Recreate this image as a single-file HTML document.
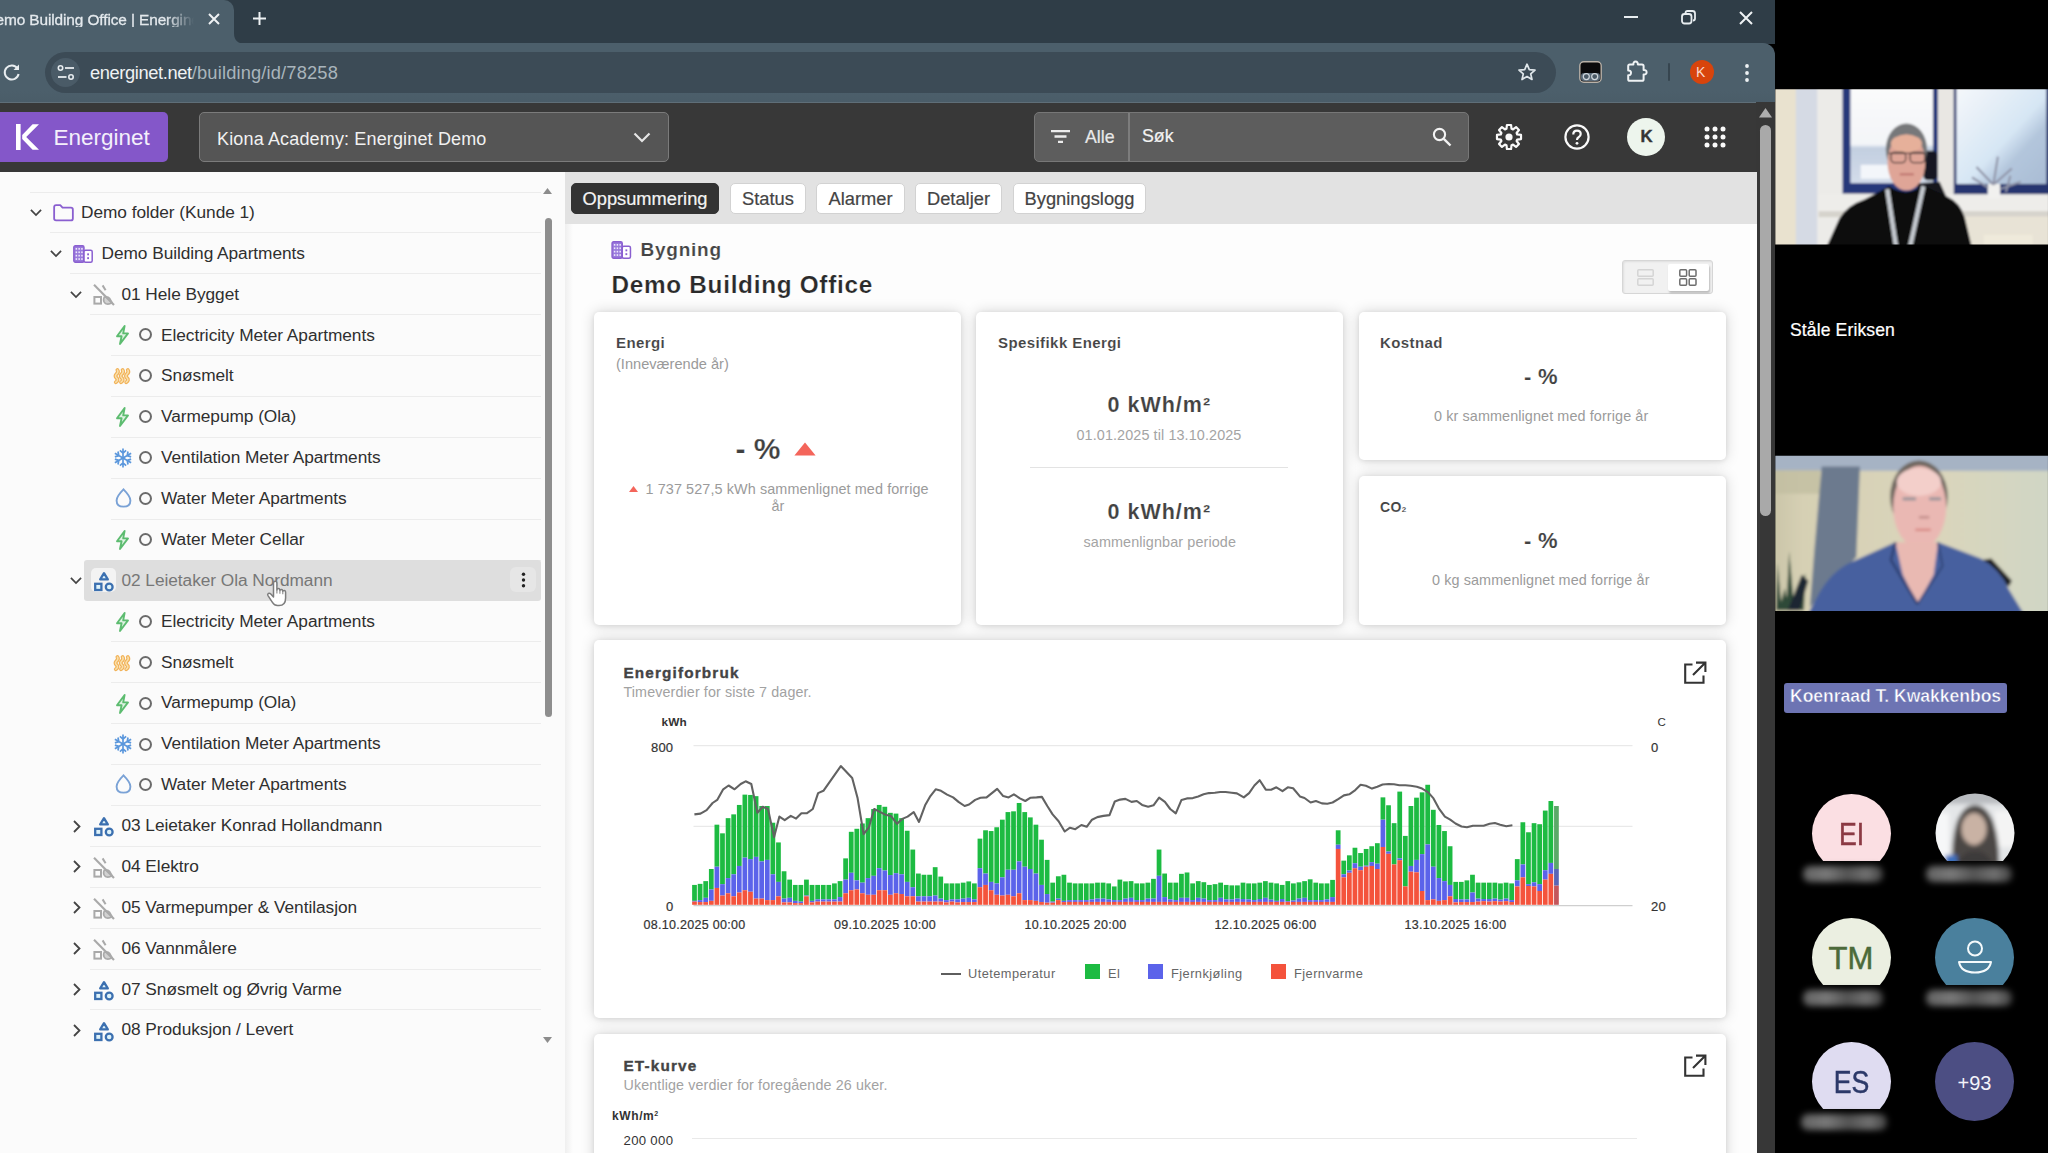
<!DOCTYPE html>
<html><head><meta charset="utf-8"><title>Demo Building Office | Energinet</title>
<style>
*{box-sizing:border-box;margin:0;padding:0}
html,body{width:2048px;height:1153px;overflow:hidden;background:#000;font-family:"Liberation Sans",sans-serif;}
body{position:relative}
.abs{position:absolute}
svg{display:block;overflow:visible}
/* browser chrome */
#tabbar{position:absolute;left:0;top:0;width:1775px;height:44px;background:#2f3d47}
#acttab{position:absolute;left:-12px;top:0;width:246px;height:44px;background:#4c5f6b;border-radius:10px 10px 0 0}
#toolbar{position:absolute;left:0;top:43px;width:1775px;height:60px;background:linear-gradient(#4c5f6b 0%,#4c5f6b 80%,#46576250 100%),#4c5f6b;border-top-right-radius:12px}
#urlpill{position:absolute;left:45px;top:52px;width:1511px;height:41px;border-radius:21px;background:#3c4b56}
#appbar{position:absolute;left:0;top:102px;width:1757px;height:70px;background:#383838;border-top:1px solid #5f6e78}
#pagescroll{position:absolute;left:1756px;top:102px;width:19px;height:1051px;background:#373737}
#leftpanel{position:absolute;left:0;top:172px;width:565px;height:981px;background:#fbfbfb}
#mainbg{position:absolute;left:565px;top:172px;width:1192px;height:981px;background:#fdfdfd}
#tabstrip{position:absolute;left:565px;top:172px;width:1192px;height:52px;background:#e2e2e2}
.card{position:absolute;background:#fff;border-radius:5px;box-shadow:0 0 14px rgba(0,0,0,0.17),0 1px 5px rgba(0,0,0,0.08)}
.t{position:absolute;white-space:nowrap;line-height:1}
.tr{font-size:17.3px;letter-spacing:-0.05px}
.tabb{top:182.5px;height:31px;border-radius:5px;font-size:18.3px;line-height:29.5px;text-align:center;white-space:nowrap;-webkit-text-stroke:0.2px currentColor}
.ch{font-size:15px;font-weight:bold;color:#444;letter-spacing:0.42px;-webkit-text-stroke:0.1px #fff}
.cs{font-size:14.4px;color:#9b9b9b;letter-spacing:0.1px}
.cv{font-size:21.5px;font-weight:bold;color:#424242;letter-spacing:1.0px;-webkit-text-stroke:0.15px #fff}
.cv2{font-size:22px;font-weight:bold;color:#424242;letter-spacing:0.3px;-webkit-text-stroke:0.15px #fff}
.ax{font-size:12.5px;color:#333;letter-spacing:0.2px}
.lg{font-size:12.8px;color:#666;letter-spacing:0.45px}

</style></head>
<body>
<div id="tabbar"></div>
<div id="acttab"></div>
<svg class="abs" style="left:234px;top:33px" width="12" height="11"><path d="M0 0 Q0 11 12 11 L0 11 Z" fill="#4c5f6b"/></svg>
<div id="toolbar"></div>
<div id="urlpill"></div>
<div class="t" id="tabtitle" style="left:-4.5px;top:12px;font-size:15.4px;color:#e4e9ed;letter-spacing:-0.1px;-webkit-text-stroke:0.3px #e4e9ed;width:198.5px;overflow:hidden;-webkit-mask-image:linear-gradient(90deg,#000 86%,transparent 100%)">emo Building Office | Energinet</div>
<svg class="abs" style="left:207px;top:12px" width="14" height="14" viewBox="0 0 14 14"><path d="M2 2 L12 12 M12 2 L2 12" stroke="#eef2f4" stroke-width="2" fill="none"/></svg>
<svg class="abs" style="left:252px;top:11px" width="15" height="15" viewBox="0 0 15 15"><path d="M7.5 1 V14 M1 7.5 H14" stroke="#eef2f4" stroke-width="2" fill="none"/></svg>
<svg class="abs" style="left:1624px;top:16px" width="14" height="3"><rect width="14" height="2" y="0" fill="#e8edf0"/></svg>
<svg class="abs" style="left:1681px;top:10px" width="15" height="15" viewBox="0 0 15 15"><rect x="1" y="4" width="9.5" height="9.5" rx="2.5" fill="none" stroke="#e8edf0" stroke-width="1.8"/><path d="M4.5 3.2 V3 Q4.5 1 6.5 1 H11.5 Q14 1 14 3.5 V8.5 Q14 10.5 12 10.5" fill="none" stroke="#e8edf0" stroke-width="1.8"/></svg>
<svg class="abs" style="left:1739px;top:11px" width="14" height="14" viewBox="0 0 14 14"><path d="M1 1 L13 13 M13 1 L1 13" stroke="#eef2f4" stroke-width="2" fill="none"/></svg>
<svg class="abs" style="left:2px;top:62px" width="20" height="20" viewBox="0 0 20 20"><path d="M15.5 6.5 A7 7 0 1 0 16.6 12" fill="none" stroke="#e8edf0" stroke-width="2"/><path d="M17 2.5 V8 H11.5 Z" fill="#e8edf0"/></svg>
<div class="abs" style="left:51px;top:58px;width:29px;height:29px;border-radius:15px;background:#4a5b67"></div>
<svg class="abs" style="left:57px;top:64px" width="18" height="17" viewBox="0 0 18 17"><circle cx="3.5" cy="4" r="2.2" fill="none" stroke="#e8edf0" stroke-width="1.6"/><path d="M8 4 H17" stroke="#e8edf0" stroke-width="1.8"/><circle cx="14" cy="13" r="2.2" fill="none" stroke="#e8edf0" stroke-width="1.6"/><path d="M1 13 H9.5" stroke="#e8edf0" stroke-width="1.8"/></svg>
<div class="t" style="left:90px;top:63.5px;font-size:18.3px;color:#eef1f3;letter-spacing:-0.38px">energinet.net<span style="color:#a9b5bc;letter-spacing:0.16px">/building/id/78258</span></div>
<svg class="abs" style="left:1517px;top:62px" width="20" height="20" viewBox="0 0 20 20"><path d="M10 2.2 L12.3 7.6 L18 8.1 L13.7 11.9 L15 17.5 L10 14.5 L5 17.5 L6.3 11.9 L2 8.1 L7.7 7.6 Z" fill="none" stroke="#dfe6ea" stroke-width="1.7" stroke-linejoin="round"/></svg>
<svg class="abs" style="left:1579px;top:61px" width="23" height="22" viewBox="0 0 23 22"><rect x="0.8" y="0.8" width="21.4" height="20.4" rx="4" fill="#0a0a0c" stroke="#b9b1a8" stroke-width="1.4"/><rect x="2" y="12" width="19" height="8" rx="3" fill="#5a6a78"/><circle cx="7.3" cy="15.6" r="3" fill="#4a5966" stroke="#cfd6dc" stroke-width="1.2"/><circle cx="15.7" cy="15.6" r="3" fill="#4a5966" stroke="#cfd6dc" stroke-width="1.2"/></svg>
<svg class="abs" style="left:1626px;top:60px" width="22" height="23" viewBox="0 0 22 23"><path d="M2.2 6 Q2.2 4.4 3.8 4.4 H7.4 Q7.2 1.6 9.6 1.6 Q12 1.6 11.8 4.4 H16 Q17.6 4.4 17.6 6 V10 Q20.6 9.8 20.6 12.2 Q20.6 14.6 17.6 14.4 V19.2 Q17.6 20.8 16 20.8 H3.8 Q2.2 20.8 2.2 19.2 V15.2 Q5 15.4 5 12.8 Q5 10.2 2.2 10.4 Z" fill="none" stroke="#eef2f4" stroke-width="2" stroke-linejoin="round"/></svg>
<div class="abs" style="left:1668px;top:63px;width:2px;height:18px;background:#36454f;border-radius:1px"></div>
<div class="abs" style="left:1690px;top:60px;width:24px;height:24px;border-radius:12px;background:#d8440c"></div><div class="t" style="left:1696px;top:65px;font-size:14px;color:#fbd9cf;font-weight:normal">K</div>
<svg class="abs" style="left:1744px;top:63px" width="6" height="20" viewBox="0 0 6 20"><circle cx="3" cy="3" r="1.9" fill="#eef2f4"/><circle cx="3" cy="10" r="1.9" fill="#eef2f4"/><circle cx="3" cy="17" r="1.9" fill="#eef2f4"/></svg>
<div id="appbar"></div>
<div id="pagescroll"></div>
<svg class="abs" style="left:1759px;top:108px" width="13" height="9.5"><path d="M6.5 0 L13 9.5 H0 Z" fill="#adadad"/></svg>
<div class="abs" style="left:1759.6px;top:124.5px;width:11.2px;height:391.5px;border-radius:6px;background:#a9a9a9"></div>
<div class="abs" style="left:-6px;top:112px;width:174px;height:50px;border-radius:5px;background:#8457c9"></div>
<svg class="abs" style="left:16px;top:124px" width="24" height="26" viewBox="0 0 24 26"><rect x="0" y="0" width="4.6" height="26" fill="#fff"/><path d="M23 0.3 L10.2 13 L23 25.7 H16.6 L6.2 15 V11 L16.6 0.3 Z" fill="#fff"/></svg>
<div class="t" style="left:53.5px;top:127px;font-size:22.5px;color:#f4effb">Energinet</div>
<div class="abs" style="left:199px;top:112px;width:470px;height:50px;border-radius:5px;background:#555555;border:1.5px solid #7b7b7b"></div>
<div class="t" style="left:217px;top:130px;font-size:18px;color:#f1f1f1;letter-spacing:0.15px">Kiona Academy: Energinet Demo</div>
<svg class="abs" style="left:633px;top:132px" width="18" height="11" viewBox="0 0 18 11"><path d="M1.5 1.5 L9 9 L16.5 1.5" fill="none" stroke="#e6e6e6" stroke-width="2.2"/></svg>
<div class="abs" style="left:1034px;top:112px;width:435px;height:50px;border-radius:5px;background:#5d5d5d;border:1.5px solid #777"></div>
<div class="abs" style="left:1128px;top:113px;width:1.5px;height:48px;background:#7d7d7d"></div>
<svg class="abs" style="left:1051px;top:130px" width="19" height="13" viewBox="0 0 19 13"><path d="M0 1.1 H19 M3.5 6.5 H15.5 M7 11.9 H12" stroke="#ececec" stroke-width="2.3" fill="none"/></svg>
<div class="t" style="left:1085px;top:129px;font-size:17.8px;color:#e8e8e8;-webkit-text-stroke:0.2px #e8e8e8">Alle</div>
<div class="t" style="left:1142px;top:128px;font-size:17.8px;color:#f3f3f3;-webkit-text-stroke:0.2px #f3f3f3">Søk</div>
<svg class="abs" style="left:1432px;top:127px" width="20" height="20" viewBox="0 0 20 20"><circle cx="7.5" cy="7.5" r="5.6" fill="none" stroke="#f3f3f3" stroke-width="2.1"/><path d="M11.8 11.8 L18.5 18.5" stroke="#f3f3f3" stroke-width="2.4"/></svg>
<svg class="abs" style="left:1496px;top:124px" width="26" height="26" viewBox="0 0 26 26"><path d="M10.46 4.78 L10.94 0.98 L15.06 0.98 L15.54 4.78 L17.01 5.39 L20.04 3.04 L22.96 5.96 L20.61 8.99 L21.22 10.46 L25.02 10.94 L25.02 15.06 L21.22 15.54 L20.61 17.01 L22.96 20.04 L20.04 22.96 L17.01 20.61 L15.54 21.22 L15.06 25.02 L10.94 25.02 L10.46 21.22 L8.99 20.61 L5.96 22.96 L3.04 20.04 L5.39 17.01 L4.78 15.54 L0.98 15.06 L0.98 10.94 L4.78 10.46 L5.39 8.99 L3.04 5.96 L5.96 3.04 L8.99 5.39 Z" fill="none" stroke="#fafafa" stroke-width="2.2" stroke-linejoin="round"/><circle cx="13" cy="13" r="3.6" fill="#fafafa"/></svg>
<svg class="abs" style="left:1564px;top:124px" width="26" height="26" viewBox="0 0 26 26"><circle cx="13" cy="13" r="11.6" fill="none" stroke="#fafafa" stroke-width="2.2"/><path d="M9.3 10.4 Q9.3 6.6 13 6.6 Q16.7 6.6 16.7 10 Q16.7 12 14.6 13.2 Q13 14.2 13 16" fill="none" stroke="#fafafa" stroke-width="2.2"/><circle cx="13" cy="19.3" r="1.4" fill="#fafafa"/></svg>
<div class="abs" style="left:1627px;top:118px;width:38px;height:38px;border-radius:19px;background:#edf5ed"></div><div class="t" style="left:1640.5px;top:129px;font-size:16.8px;font-weight:bold;color:#353535;-webkit-text-stroke:0.4px #353535">K</div>
<svg class="abs" style="left:1704px;top:126px" width="22" height="22" viewBox="0 0 22 22"><circle cx="3" cy="3" r="2.5" fill="#fafafa"/><circle cx="3" cy="11" r="2.5" fill="#fafafa"/><circle cx="3" cy="19" r="2.5" fill="#fafafa"/><circle cx="11" cy="3" r="2.5" fill="#fafafa"/><circle cx="11" cy="11" r="2.5" fill="#fafafa"/><circle cx="11" cy="19" r="2.5" fill="#fafafa"/><circle cx="19" cy="3" r="2.5" fill="#fafafa"/><circle cx="19" cy="11" r="2.5" fill="#fafafa"/><circle cx="19" cy="19" r="2.5" fill="#fafafa"/></svg>
<div id="leftpanel"></div>
<div class="abs" style="left:30px;top:191.5px;width:511px;height:1.1px;background:#ececec"></div>
<div class="abs" style="left:50px;top:232.3px;width:491px;height:1.1px;background:#ececec"></div>
<svg class="abs" style="left:29.8px;top:208.8px" width="12" height="7.5" viewBox="0 0 13 8"><path d="M1 1 L6.5 6.5 L12 1" fill="none" stroke="#444" stroke-width="1.9"/></svg><svg class="abs" style="left:52.7px;top:204.3px" width="21" height="17.5" viewBox="0 0 22 18" preserveAspectRatio="none"><path d="M1.2 3.2 Q1.2 1.2 3.2 1.2 H7.6 L10 3.8 H18.8 Q20.8 3.8 20.8 5.8 V14.8 Q20.8 16.8 18.8 16.8 H3.2 Q1.2 16.8 1.2 14.8 Z" fill="none" stroke="#8a5fd0" stroke-width="1.9" stroke-linejoin="round"/></svg><div class="t tr" style="left:81.0px;top:203.9px;color:#2f2f2f">Demo folder (Kunde 1)</div>
<div class="abs" style="left:70px;top:273.2px;width:471px;height:1.1px;background:#ececec"></div>
<svg class="abs" style="left:49.8px;top:249.8px" width="12" height="7.5" viewBox="0 0 13 8"><path d="M1 1 L6.5 6.5 L12 1" fill="none" stroke="#444" stroke-width="1.9"/></svg><svg class="abs" style="left:72.7px;top:245.1px" width="20" height="18" viewBox="0 0 20 18"><rect x="0.8" y="0.8" width="10.2" height="16.4" rx="1.5" fill="#9a7bdc" stroke="#8a5fd0" stroke-width="1.4"/><rect x="11" y="5.2" width="8.2" height="12" rx="1.5" fill="#fff" stroke="#8a5fd0" stroke-width="1.5"/><rect x="2.6" y="3.0" width="1.5" height="1.7" fill="#efe8fb"/><rect x="5.4" y="3.0" width="1.5" height="1.7" fill="#efe8fb"/><rect x="8.2" y="3.0" width="1.5" height="1.7" fill="#efe8fb"/><rect x="2.6" y="6.4" width="1.5" height="1.7" fill="#efe8fb"/><rect x="5.4" y="6.4" width="1.5" height="1.7" fill="#efe8fb"/><rect x="8.2" y="6.4" width="1.5" height="1.7" fill="#efe8fb"/><rect x="2.6" y="9.8" width="1.5" height="1.7" fill="#efe8fb"/><rect x="5.4" y="9.8" width="1.5" height="1.7" fill="#efe8fb"/><rect x="8.2" y="9.8" width="1.5" height="1.7" fill="#efe8fb"/><rect x="2.6" y="13.2" width="1.5" height="1.7" fill="#efe8fb"/><rect x="5.4" y="13.2" width="1.5" height="1.7" fill="#efe8fb"/><rect x="8.2" y="13.2" width="1.5" height="1.7" fill="#efe8fb"/><rect x="14.2" y="8.4" width="1.8" height="1.9" fill="#8a5fd0"/><rect x="14.2" y="12.2" width="1.8" height="1.9" fill="#8a5fd0"/></svg><div class="t tr" style="left:101.5px;top:244.8px;color:#2f2f2f">Demo Building Apartments</div>
<div class="abs" style="left:90px;top:314.1px;width:451px;height:1.1px;background:#ececec"></div>
<svg class="abs" style="left:69.8px;top:290.6px" width="12" height="7.5" viewBox="0 0 13 8"><path d="M1 1 L6.5 6.5 L12 1" fill="none" stroke="#444" stroke-width="1.9"/></svg><svg class="abs" style="left:92.5px;top:284.1px" width="22" height="22" viewBox="0 0 22 22"><rect x="1.4" y="13" width="6.6" height="6.6" fill="none" stroke="#a9a9a9" stroke-width="2"/><path d="M11.2 13.2 Q14.6 11.8 16.8 14.6 L19 18.6 Q16 20.8 13 19.8 Q10.4 18.4 10.6 15.4 Z" fill="#d2d2d2" stroke="#a9a9a9" stroke-width="1.6"/><path d="M9.6 1.4 L12.6 6.2" stroke="#a9a9a9" stroke-width="2"/><path d="M1 0.8 L21 21" stroke="#a9a9a9" stroke-width="2.1"/></svg><div class="t tr" style="left:121.5px;top:285.7px;color:#2f2f2f">01 Hele Bygget</div>
<div class="abs" style="left:111px;top:355.0px;width:430px;height:1.1px;background:#ececec"></div>
<svg class="abs" style="left:115.4px;top:325.4px" width="15" height="20" viewBox="0 0 15 20"><path d="M9.6 1 L2 11.2 H6.6 L5 19 L13 8.4 H8.2 Z" fill="#dff3e3" stroke="#5dbc70" stroke-width="1.9" stroke-linejoin="round"/></svg><div class="abs" style="left:139px;top:328.4px;width:13px;height:13px;border-radius:7px;border:2px solid #6b6b6b"></div><div class="t tr" style="left:161px;top:326.6px;color:#2f2f2f">Electricity Meter Apartments</div>
<div class="abs" style="left:111px;top:395.9px;width:430px;height:1.1px;background:#ececec"></div>
<svg class="abs" style="left:113.4px;top:367.3px" width="18" height="18" viewBox="0 0 18 18"><path d="M4.4 3 Q5.8 5 3.6 7 Q1.4 9 3.6 11 Q5.8 13 2.8 15.2" fill="none" stroke="#f1b258" stroke-width="3.9" stroke-linecap="round"/><path d="M4.4 3 Q5.8 5 3.6 7 Q1.4 9 3.6 11 Q5.8 13 2.8 15.2" fill="none" stroke="#fae0ac" stroke-width="1.5" stroke-linecap="round"/><path d="M9.6 3 Q11.0 5 8.8 7 Q6.6 9 8.8 11 Q11.0 13 8.0 15.2" fill="none" stroke="#f1b258" stroke-width="3.9" stroke-linecap="round"/><path d="M9.6 3 Q11.0 5 8.8 7 Q6.6 9 8.8 11 Q11.0 13 8.0 15.2" fill="none" stroke="#fae0ac" stroke-width="1.5" stroke-linecap="round"/><path d="M14.8 3 Q16.2 5 14.0 7 Q11.8 9 14.0 11 Q16.2 13 13.2 15.2" fill="none" stroke="#f1b258" stroke-width="3.9" stroke-linecap="round"/><path d="M14.8 3 Q16.2 5 14.0 7 Q11.8 9 14.0 11 Q16.2 13 13.2 15.2" fill="none" stroke="#fae0ac" stroke-width="1.5" stroke-linecap="round"/></svg><div class="abs" style="left:139px;top:369.3px;width:13px;height:13px;border-radius:7px;border:2px solid #6b6b6b"></div><div class="t tr" style="left:161px;top:367.4px;color:#2f2f2f">Snøsmelt</div>
<div class="abs" style="left:111px;top:436.8px;width:430px;height:1.1px;background:#ececec"></div>
<svg class="abs" style="left:115.4px;top:407.2px" width="15" height="20" viewBox="0 0 15 20"><path d="M9.6 1 L2 11.2 H6.6 L5 19 L13 8.4 H8.2 Z" fill="#dff3e3" stroke="#5dbc70" stroke-width="1.9" stroke-linejoin="round"/></svg><div class="abs" style="left:139px;top:410.2px;width:13px;height:13px;border-radius:7px;border:2px solid #6b6b6b"></div><div class="t tr" style="left:161px;top:408.3px;color:#2f2f2f">Varmepump (Ola)</div>
<div class="abs" style="left:111px;top:477.7px;width:430px;height:1.1px;background:#ececec"></div>
<svg class="abs" style="left:112.8px;top:447.6px" width="20" height="20" viewBox="0 0 20 20"><g transform="rotate(0 10 10)"><path d="M10 0.6 V19.4 M6.9 2.4 L10 5.2 L13.1 2.4 M6.9 17.6 L10 14.8 L13.1 17.6" fill="none" stroke="#5b97dc" stroke-width="1.7"/></g><g transform="rotate(60 10 10)"><path d="M10 0.6 V19.4 M6.9 2.4 L10 5.2 L13.1 2.4 M6.9 17.6 L10 14.8 L13.1 17.6" fill="none" stroke="#5b97dc" stroke-width="1.7"/></g><g transform="rotate(120 10 10)"><path d="M10 0.6 V19.4 M6.9 2.4 L10 5.2 L13.1 2.4 M6.9 17.6 L10 14.8 L13.1 17.6" fill="none" stroke="#5b97dc" stroke-width="1.7"/></g></svg><div class="abs" style="left:139px;top:451.1px;width:13px;height:13px;border-radius:7px;border:2px solid #6b6b6b"></div><div class="t tr" style="left:161px;top:449.2px;color:#2f2f2f">Ventilation Meter Apartments</div>
<div class="abs" style="left:111px;top:518.6px;width:430px;height:1.1px;background:#ececec"></div>
<svg class="abs" style="left:114.8px;top:487.9px" width="17" height="20" viewBox="0 0 17 20"><path d="M8.5 1.4 Q15.4 8.4 15.4 12.4 Q15.4 18.6 8.5 18.6 Q1.6 18.6 1.6 12.4 Q1.6 8.4 8.5 1.4 Z" fill="none" stroke="#7aa2d6" stroke-width="1.9"/></svg><div class="abs" style="left:139px;top:492.1px;width:13px;height:13px;border-radius:7px;border:2px solid #6b6b6b"></div><div class="t tr" style="left:161px;top:490.0px;color:#2f2f2f">Water Meter Apartments</div>
<div class="abs" style="left:111px;top:559.5px;width:430px;height:1.1px;background:#ececec"></div>
<svg class="abs" style="left:115.4px;top:530.0px" width="15" height="20" viewBox="0 0 15 20"><path d="M9.6 1 L2 11.2 H6.6 L5 19 L13 8.4 H8.2 Z" fill="#dff3e3" stroke="#5dbc70" stroke-width="1.9" stroke-linejoin="round"/></svg><div class="abs" style="left:139px;top:533.0px;width:13px;height:13px;border-radius:7px;border:2px solid #6b6b6b"></div><div class="t tr" style="left:161px;top:530.9px;color:#2f2f2f">Water Meter Cellar</div>
<div class="abs" style="left:84px;top:560.4px;width:457px;height:40.4px;background:#dedede;border-radius:3px"></div>
<div class="abs" style="left:90.5px;top:568.4px;width:25px;height:24px;border-radius:5px;background:#f3f3f3"></div>
<div class="abs" style="left:510px;top:567.4px;width:26px;height:25px;border-radius:6px;background:#e6e6e6"></div>
<svg class="abs" style="left:69.8px;top:577.0px" width="12" height="7.5" viewBox="0 0 13 8"><path d="M1 1 L6.5 6.5 L12 1" fill="none" stroke="#444" stroke-width="1.9"/></svg><svg class="abs" style="left:92.5px;top:571.0px" width="22" height="22" viewBox="0 0 22 22"><path d="M11 2.2 L14.8 8.4 H7.2 Z" fill="#dff3fa" stroke="#3c70b0" stroke-width="2.3" stroke-linejoin="round"/><rect x="2.2" y="12.8" width="6.2" height="6.2" fill="#dff3fa" stroke="#3c70b0" stroke-width="2.3"/><circle cx="16.2" cy="16" r="3.4" fill="#dff3fa" stroke="#3c70b0" stroke-width="2.3"/></svg><div class="t tr" style="left:121.5px;top:571.8px;color:#777">02 Leietaker Ola Nordmann</div>
<div class="abs" style="left:111px;top:641.3px;width:430px;height:1.1px;background:#ececec"></div>
<svg class="abs" style="left:115.4px;top:611.8px" width="15" height="20" viewBox="0 0 15 20"><path d="M9.6 1 L2 11.2 H6.6 L5 19 L13 8.4 H8.2 Z" fill="#dff3e3" stroke="#5dbc70" stroke-width="1.9" stroke-linejoin="round"/></svg><div class="abs" style="left:139px;top:614.8px;width:13px;height:13px;border-radius:7px;border:2px solid #6b6b6b"></div><div class="t tr" style="left:161px;top:612.7px;color:#2f2f2f">Electricity Meter Apartments</div>
<div class="abs" style="left:111px;top:682.2px;width:430px;height:1.1px;background:#ececec"></div>
<svg class="abs" style="left:113.4px;top:653.7px" width="18" height="18" viewBox="0 0 18 18"><path d="M4.4 3 Q5.8 5 3.6 7 Q1.4 9 3.6 11 Q5.8 13 2.8 15.2" fill="none" stroke="#f1b258" stroke-width="3.9" stroke-linecap="round"/><path d="M4.4 3 Q5.8 5 3.6 7 Q1.4 9 3.6 11 Q5.8 13 2.8 15.2" fill="none" stroke="#fae0ac" stroke-width="1.5" stroke-linecap="round"/><path d="M9.6 3 Q11.0 5 8.8 7 Q6.6 9 8.8 11 Q11.0 13 8.0 15.2" fill="none" stroke="#f1b258" stroke-width="3.9" stroke-linecap="round"/><path d="M9.6 3 Q11.0 5 8.8 7 Q6.6 9 8.8 11 Q11.0 13 8.0 15.2" fill="none" stroke="#fae0ac" stroke-width="1.5" stroke-linecap="round"/><path d="M14.8 3 Q16.2 5 14.0 7 Q11.8 9 14.0 11 Q16.2 13 13.2 15.2" fill="none" stroke="#f1b258" stroke-width="3.9" stroke-linecap="round"/><path d="M14.8 3 Q16.2 5 14.0 7 Q11.8 9 14.0 11 Q16.2 13 13.2 15.2" fill="none" stroke="#fae0ac" stroke-width="1.5" stroke-linecap="round"/></svg><div class="abs" style="left:139px;top:655.7px;width:13px;height:13px;border-radius:7px;border:2px solid #6b6b6b"></div><div class="t tr" style="left:161px;top:653.5px;color:#2f2f2f">Snøsmelt</div>
<div class="abs" style="left:111px;top:723.1px;width:430px;height:1.1px;background:#ececec"></div>
<svg class="abs" style="left:115.4px;top:693.5px" width="15" height="20" viewBox="0 0 15 20"><path d="M9.6 1 L2 11.2 H6.6 L5 19 L13 8.4 H8.2 Z" fill="#dff3e3" stroke="#5dbc70" stroke-width="1.9" stroke-linejoin="round"/></svg><div class="abs" style="left:139px;top:696.5px;width:13px;height:13px;border-radius:7px;border:2px solid #6b6b6b"></div><div class="t tr" style="left:161px;top:694.4px;color:#2f2f2f">Varmepump (Ola)</div>
<div class="abs" style="left:111px;top:764.0px;width:430px;height:1.1px;background:#ececec"></div>
<svg class="abs" style="left:112.8px;top:734.0px" width="20" height="20" viewBox="0 0 20 20"><g transform="rotate(0 10 10)"><path d="M10 0.6 V19.4 M6.9 2.4 L10 5.2 L13.1 2.4 M6.9 17.6 L10 14.8 L13.1 17.6" fill="none" stroke="#5b97dc" stroke-width="1.7"/></g><g transform="rotate(60 10 10)"><path d="M10 0.6 V19.4 M6.9 2.4 L10 5.2 L13.1 2.4 M6.9 17.6 L10 14.8 L13.1 17.6" fill="none" stroke="#5b97dc" stroke-width="1.7"/></g><g transform="rotate(120 10 10)"><path d="M10 0.6 V19.4 M6.9 2.4 L10 5.2 L13.1 2.4 M6.9 17.6 L10 14.8 L13.1 17.6" fill="none" stroke="#5b97dc" stroke-width="1.7"/></g></svg><div class="abs" style="left:139px;top:737.5px;width:13px;height:13px;border-radius:7px;border:2px solid #6b6b6b"></div><div class="t tr" style="left:161px;top:735.3px;color:#2f2f2f">Ventilation Meter Apartments</div>
<div class="abs" style="left:111px;top:804.9px;width:430px;height:1.1px;background:#ececec"></div>
<svg class="abs" style="left:114.8px;top:774.2px" width="17" height="20" viewBox="0 0 17 20"><path d="M8.5 1.4 Q15.4 8.4 15.4 12.4 Q15.4 18.6 8.5 18.6 Q1.6 18.6 1.6 12.4 Q1.6 8.4 8.5 1.4 Z" fill="none" stroke="#7aa2d6" stroke-width="1.9"/></svg><div class="abs" style="left:139px;top:778.4px;width:13px;height:13px;border-radius:7px;border:2px solid #6b6b6b"></div><div class="t tr" style="left:161px;top:776.1px;color:#2f2f2f">Water Meter Apartments</div>
<div class="abs" style="left:90px;top:845.8px;width:451px;height:1.1px;background:#ececec"></div>
<svg class="abs" style="left:73.0px;top:819.5px" width="8" height="13" viewBox="0 0 8 13"><path d="M1 1 L6.5 6.5 L1 12" fill="none" stroke="#444" stroke-width="1.8"/></svg><svg class="abs" style="left:92.5px;top:816.4px" width="22" height="22" viewBox="0 0 22 22"><path d="M11 2.2 L14.8 8.4 H7.2 Z" fill="#dff3fa" stroke="#3c70b0" stroke-width="2.3" stroke-linejoin="round"/><rect x="2.2" y="12.8" width="6.2" height="6.2" fill="#dff3fa" stroke="#3c70b0" stroke-width="2.3"/><circle cx="16.2" cy="16" r="3.4" fill="#dff3fa" stroke="#3c70b0" stroke-width="2.3"/></svg><div class="t tr" style="left:121.5px;top:817.0px;color:#2f2f2f">03 Leietaker Konrad Hollandmann</div>
<div class="abs" style="left:90px;top:886.7px;width:451px;height:1.1px;background:#ececec"></div>
<svg class="abs" style="left:73.0px;top:860.4px" width="8" height="13" viewBox="0 0 8 13"><path d="M1 1 L6.5 6.5 L1 12" fill="none" stroke="#444" stroke-width="1.8"/></svg><svg class="abs" style="left:92.5px;top:856.8px" width="22" height="22" viewBox="0 0 22 22"><rect x="1.4" y="13" width="6.6" height="6.6" fill="none" stroke="#a9a9a9" stroke-width="2"/><path d="M11.2 13.2 Q14.6 11.8 16.8 14.6 L19 18.6 Q16 20.8 13 19.8 Q10.4 18.4 10.6 15.4 Z" fill="#d2d2d2" stroke="#a9a9a9" stroke-width="1.6"/><path d="M9.6 1.4 L12.6 6.2" stroke="#a9a9a9" stroke-width="2"/><path d="M1 0.8 L21 21" stroke="#a9a9a9" stroke-width="2.1"/></svg><div class="t tr" style="left:121.5px;top:857.9px;color:#2f2f2f">04 Elektro</div>
<div class="abs" style="left:90px;top:927.6px;width:451px;height:1.1px;background:#ececec"></div>
<svg class="abs" style="left:73.0px;top:901.2px" width="8" height="13" viewBox="0 0 8 13"><path d="M1 1 L6.5 6.5 L1 12" fill="none" stroke="#444" stroke-width="1.8"/></svg><svg class="abs" style="left:92.5px;top:897.6px" width="22" height="22" viewBox="0 0 22 22"><rect x="1.4" y="13" width="6.6" height="6.6" fill="none" stroke="#a9a9a9" stroke-width="2"/><path d="M11.2 13.2 Q14.6 11.8 16.8 14.6 L19 18.6 Q16 20.8 13 19.8 Q10.4 18.4 10.6 15.4 Z" fill="#d2d2d2" stroke="#a9a9a9" stroke-width="1.6"/><path d="M9.6 1.4 L12.6 6.2" stroke="#a9a9a9" stroke-width="2"/><path d="M1 0.8 L21 21" stroke="#a9a9a9" stroke-width="2.1"/></svg><div class="t tr" style="left:121.5px;top:898.7px;color:#2f2f2f">05 Varmepumper &amp; Ventilasjon</div>
<div class="abs" style="left:90px;top:968.5px;width:451px;height:1.1px;background:#ececec"></div>
<svg class="abs" style="left:73.0px;top:942.2px" width="8" height="13" viewBox="0 0 8 13"><path d="M1 1 L6.5 6.5 L1 12" fill="none" stroke="#444" stroke-width="1.8"/></svg><svg class="abs" style="left:92.5px;top:938.6px" width="22" height="22" viewBox="0 0 22 22"><rect x="1.4" y="13" width="6.6" height="6.6" fill="none" stroke="#a9a9a9" stroke-width="2"/><path d="M11.2 13.2 Q14.6 11.8 16.8 14.6 L19 18.6 Q16 20.8 13 19.8 Q10.4 18.4 10.6 15.4 Z" fill="#d2d2d2" stroke="#a9a9a9" stroke-width="1.6"/><path d="M9.6 1.4 L12.6 6.2" stroke="#a9a9a9" stroke-width="2"/><path d="M1 0.8 L21 21" stroke="#a9a9a9" stroke-width="2.1"/></svg><div class="t tr" style="left:121.5px;top:939.6px;color:#2f2f2f">06 Vannmålere</div>
<div class="abs" style="left:90px;top:1009.4px;width:451px;height:1.1px;background:#ececec"></div>
<svg class="abs" style="left:73.0px;top:983.1px" width="8" height="13" viewBox="0 0 8 13"><path d="M1 1 L6.5 6.5 L1 12" fill="none" stroke="#444" stroke-width="1.8"/></svg><svg class="abs" style="left:92.5px;top:980.0px" width="22" height="22" viewBox="0 0 22 22"><path d="M11 2.2 L14.8 8.4 H7.2 Z" fill="#dff3fa" stroke="#3c70b0" stroke-width="2.3" stroke-linejoin="round"/><rect x="2.2" y="12.8" width="6.2" height="6.2" fill="#dff3fa" stroke="#3c70b0" stroke-width="2.3"/><circle cx="16.2" cy="16" r="3.4" fill="#dff3fa" stroke="#3c70b0" stroke-width="2.3"/></svg><div class="t tr" style="left:121.5px;top:980.5px;color:#2f2f2f">07 Snøsmelt og Øvrig Varme</div>
<svg class="abs" style="left:73.0px;top:1024.0px" width="8" height="13" viewBox="0 0 8 13"><path d="M1 1 L6.5 6.5 L1 12" fill="none" stroke="#444" stroke-width="1.8"/></svg><svg class="abs" style="left:92.5px;top:1020.9px" width="22" height="22" viewBox="0 0 22 22"><path d="M11 2.2 L14.8 8.4 H7.2 Z" fill="#dff3fa" stroke="#3c70b0" stroke-width="2.3" stroke-linejoin="round"/><rect x="2.2" y="12.8" width="6.2" height="6.2" fill="#dff3fa" stroke="#3c70b0" stroke-width="2.3"/><circle cx="16.2" cy="16" r="3.4" fill="#dff3fa" stroke="#3c70b0" stroke-width="2.3"/></svg><div class="t tr" style="left:121.5px;top:1021.4px;color:#2f2f2f">08 Produksjon / Levert</div>
<svg class="abs" style="left:520.5px;top:572.4px" width="5" height="16" viewBox="0 0 5 16"><circle cx="2.5" cy="2.2" r="1.7" fill="#222"/><circle cx="2.5" cy="8" r="1.7" fill="#222"/><circle cx="2.5" cy="13.8" r="1.7" fill="#222"/></svg>
<svg class="abs" style="left:266px;top:580px" width="22" height="27" viewBox="0 0 22 27"><path d="M7.5 14 V3.2 Q7.5 1.2 9.2 1.2 Q10.9 1.2 10.9 3.2 V10 Q11 8.6 12.4 8.6 Q13.9 8.6 13.9 10.6 Q14.1 9.4 15.4 9.4 Q16.8 9.4 16.8 11.4 Q17 10.4 18.2 10.4 Q19.6 10.4 19.6 12.6 V18 Q19.6 25.6 13 25.6 H11.5 Q8.4 25.6 6.4 22.4 L2 15.6 Q1.2 14.2 2.4 13.4 Q3.6 12.8 4.8 14 L7.5 17 Z" fill="#fff" stroke="#7d7d7d" stroke-width="1.5" stroke-linejoin="round"/><path d="M10.9 10 V13.4 M13.9 11 V13.8 M16.8 12 V14.2" stroke="#8a8a8a" stroke-width="1.1"/></svg>
<svg class="abs" style="left:543px;top:188px" width="9" height="6"><path d="M4.5 0 L9 6 H0 Z" fill="#8c8c8c"/></svg>
<svg class="abs" style="left:543px;top:1037px" width="9" height="6"><path d="M4.5 6 L9 0 H0 Z" fill="#8c8c8c"/></svg>
<div class="abs" style="left:544.5px;top:218px;width:7px;height:499px;border-radius:4px;background:#8e8e8e"></div>
<div id="mainbg"></div>
<div id="tabstrip"></div>
<div class="abs" style="left:565px;top:224px;width:8px;height:929px;background:linear-gradient(90deg,#efefef,#fdfdfd)"></div>
<div class="abs tabb" style="left:571px;width:148px;background:#333;color:#f4f4f4;border:1px solid #333">Oppsummering</div>
<div class="abs tabb" style="left:730px;width:76px;background:#fff;color:#444;border:1px solid #d2d2d2">Status</div>
<div class="abs tabb" style="left:816px;width:89px;background:#fff;color:#444;border:1px solid #d2d2d2">Alarmer</div>
<div class="abs tabb" style="left:915px;width:87px;background:#fff;color:#444;border:1px solid #d2d2d2">Detaljer</div>
<div class="abs tabb" style="left:1013px;width:133px;background:#fff;color:#444;border:1px solid #d2d2d2">Bygningslogg</div>
<svg class="abs" style="left:611px;top:241px" width="20.5" height="18" viewBox="0 0 20 18"><rect x="0.8" y="0.8" width="10.2" height="16.4" rx="1.5" fill="#9a7bdc" stroke="#8a5fd0" stroke-width="1.4"/><rect x="11" y="5.2" width="8.2" height="12" rx="1.5" fill="#fff" stroke="#8a5fd0" stroke-width="1.5"/><rect x="2.6" y="3.0" width="1.5" height="1.7" fill="#efe8fb"/><rect x="5.4" y="3.0" width="1.5" height="1.7" fill="#efe8fb"/><rect x="8.2" y="3.0" width="1.5" height="1.7" fill="#efe8fb"/><rect x="2.6" y="6.4" width="1.5" height="1.7" fill="#efe8fb"/><rect x="5.4" y="6.4" width="1.5" height="1.7" fill="#efe8fb"/><rect x="8.2" y="6.4" width="1.5" height="1.7" fill="#efe8fb"/><rect x="2.6" y="9.8" width="1.5" height="1.7" fill="#efe8fb"/><rect x="5.4" y="9.8" width="1.5" height="1.7" fill="#efe8fb"/><rect x="8.2" y="9.8" width="1.5" height="1.7" fill="#efe8fb"/><rect x="2.6" y="13.2" width="1.5" height="1.7" fill="#efe8fb"/><rect x="5.4" y="13.2" width="1.5" height="1.7" fill="#efe8fb"/><rect x="8.2" y="13.2" width="1.5" height="1.7" fill="#efe8fb"/><rect x="14.2" y="8.4" width="1.8" height="1.9" fill="#8a5fd0"/><rect x="14.2" y="12.2" width="1.8" height="1.9" fill="#8a5fd0"/></svg>
<div class="t" style="left:640.5px;top:240.3px;font-size:19px;font-weight:bold;color:#454545;letter-spacing:0.75px;-webkit-text-stroke:0.15px #fff">Bygning</div>
<div class="t" style="left:611.5px;top:272.5px;font-size:24.3px;font-weight:bold;color:#2a2a2a;letter-spacing:0.72px;-webkit-text-stroke:0.22px #fff">Demo Building Office</div>
<div class="abs" style="left:1622px;top:260px;width:90.5px;height:34px;border-radius:3px;background:#f1f1f1;border:1.6px solid #d6d6d6;box-shadow:inset 1px 1px 2px rgba(0,0,0,0.08)"></div>
<div class="abs" style="left:1668px;top:263.5px;width:41px;height:27px;border-radius:2px;background:#fff;box-shadow:1px 2px 2px rgba(0,0,0,0.22)"></div>
<svg class="abs" style="left:1637px;top:268.5px" width="17" height="17" viewBox="0 0 17 17"><rect x="0.8" y="0.8" width="15.4" height="6.4" rx="1" fill="none" stroke="#d4d4d4" stroke-width="1.5"/><rect x="0.8" y="9.8" width="15.4" height="6.4" rx="1" fill="none" stroke="#d4d4d4" stroke-width="1.5"/></svg>
<svg class="abs" style="left:1679px;top:268.5px" width="18" height="17" viewBox="0 0 18 17"><rect x="0.8" y="0.8" width="6.8" height="6.4" rx="1" fill="none" stroke="#6e6e6e" stroke-width="1.5"/><rect x="10.2" y="0.8" width="6.8" height="6.4" rx="1" fill="none" stroke="#6e6e6e" stroke-width="1.5"/><rect x="0.8" y="9.8" width="6.8" height="6.4" rx="1" fill="none" stroke="#6e6e6e" stroke-width="1.5"/><rect x="10.2" y="9.8" width="6.8" height="6.4" rx="1" fill="none" stroke="#6e6e6e" stroke-width="1.5"/></svg>
<div class="card" style="left:594px;top:311.5px;width:366.5px;height:313px"></div>
<div class="card" style="left:976px;top:311.5px;width:366.5px;height:313px"></div>
<div class="card" style="left:1358.5px;top:311.5px;width:367px;height:148px"></div>
<div class="card" style="left:1358.5px;top:475.5px;width:367px;height:149px"></div>
<div class="t ch" style="left:616px;top:335px">Energi</div>
<div class="t" style="left:616px;top:357px;font-size:14.6px;color:#9a9a9a">(Inneværende år)</div>
<div class="t" style="left:735.5px;top:434px;font-size:30px;font-weight:bold;color:#404040;letter-spacing:0px;-webkit-text-stroke:0.25px #fff">- %</div>
<svg class="abs" style="left:794px;top:441.5px" width="22" height="14"><path d="M11 0.5 L21.6 13.6 H0.4 Z" fill="#f4655b"/></svg>
<svg class="abs" style="left:629px;top:486px" width="9" height="6"><path d="M4.5 0 L9 6 H0 Z" fill="#f4655b"/></svg>
<div class="t cs" style="left:645.5px;top:481.5px">1 737 527,5 kWh sammenlignet med forrige</div>
<div class="t cs" style="left:771.5px;top:498.5px">år</div>
<div class="t ch" style="left:998px;top:335px">Spesifikk Energi</div>
<div class="t cv" style="left:1107.5px;top:395px">0 kWh/m²</div>
<div class="t" style="left:1076.5px;top:428px;font-size:14.4px;color:#a4a4a4;letter-spacing:0.1px">01.01.2025 til 13.10.2025</div>
<div class="abs" style="left:1030px;top:466.5px;width:258px;height:1.3px;background:#e3e3e3"></div>
<div class="t cv" style="left:1107.5px;top:501.7px">0 kWh/m²</div>
<div class="t" style="left:1083.5px;top:534.5px;font-size:14.4px;color:#a4a4a4;letter-spacing:0.1px">sammenlignbar periode</div>
<div class="t ch" style="left:1380px;top:335px">Kostnad</div>
<div class="t cv2" style="left:1524px;top:365.5px">- %</div>
<div class="t cs" style="left:1434px;top:408.5px">0 kr sammenlignet med forrige år</div>
<div class="t ch" style="left:1380px;top:500px;font-size:14px">CO<span style="font-size:8px">2</span></div>
<div class="t cv2" style="left:1524px;top:529.5px">- %</div>
<div class="t cs" style="left:1432px;top:572.5px">0 kg sammenlignet med forrige år</div>
<div class="card" style="left:594px;top:639.5px;width:1131.5px;height:378px"></div>
<div class="t" style="left:623.5px;top:664.9px;font-size:15.3px;font-weight:bold;color:#444;letter-spacing:1.15px;-webkit-text-stroke:0.35px #444">Energiforbruk</div>
<div class="t" style="left:623.5px;top:685px;font-size:14.3px;color:#a2a2a2;letter-spacing:0.12px">Timeverdier for siste 7 dager.</div>
<svg class="abs" style="left:1682px;top:661px" width="25" height="25" viewBox="0 0 25 25"><path d="M10.5 3.5 H3.2 V21.8 H21.5 V14.5" fill="none" stroke="#333" stroke-width="2.1"/><path d="M11 14 L22.5 2.5 M14 1.6 H23.4 V11" fill="none" stroke="#333" stroke-width="2.1"/></svg>
<svg class="abs" style="left:0;top:0" width="1760" height="1153" viewBox="0 0 1760 1153"><path d="M693.5 745.6 H1632.5" stroke="#e9e9e9" stroke-width="1.3"/><path d="M693.5 826.4 H1632.5" stroke="#e9e9e9" stroke-width="1.3"/><path d="M693.5 905.6 H1632.5" stroke="#cfcfcf" stroke-width="1.4"/><rect x="692.12" y="884.92" width="4.75" height="15.93" fill="#1dbb42"/><rect x="692.12" y="900.85" width="4.75" height="0.76" fill="#5b63ea"/><rect x="692.12" y="901.61" width="4.75" height="3.19" fill="#f4533c"/><rect x="697.72" y="883.86" width="4.75" height="16.24" fill="#1dbb42"/><rect x="697.72" y="900.10" width="4.75" height="1.97" fill="#5b63ea"/><rect x="697.72" y="902.07" width="4.75" height="2.73" fill="#f4533c"/><rect x="703.32" y="881.13" width="4.75" height="16.69" fill="#1dbb42"/><rect x="703.32" y="897.82" width="4.75" height="4.25" fill="#5b63ea"/><rect x="703.32" y="902.07" width="4.75" height="2.73" fill="#f4533c"/><rect x="708.92" y="868.99" width="4.75" height="20.49" fill="#1dbb42"/><rect x="708.92" y="889.47" width="4.75" height="11.38" fill="#5b63ea"/><rect x="708.92" y="900.85" width="4.75" height="3.95" fill="#f4533c"/><rect x="714.51" y="824.68" width="4.75" height="42.03" fill="#1dbb42"/><rect x="714.51" y="866.71" width="4.75" height="21.24" fill="#5b63ea"/><rect x="714.51" y="887.96" width="4.75" height="16.84" fill="#f4533c"/><rect x="720.11" y="833.33" width="4.75" height="50.83" fill="#1dbb42"/><rect x="720.11" y="884.16" width="4.75" height="11.38" fill="#5b63ea"/><rect x="720.11" y="895.54" width="4.75" height="9.26" fill="#f4533c"/><rect x="725.71" y="818.15" width="4.75" height="59.94" fill="#1dbb42"/><rect x="725.71" y="878.09" width="4.75" height="15.17" fill="#5b63ea"/><rect x="725.71" y="893.27" width="4.75" height="11.53" fill="#f4533c"/><rect x="731.30" y="814.36" width="4.75" height="59.94" fill="#1dbb42"/><rect x="731.30" y="874.30" width="4.75" height="22.00" fill="#5b63ea"/><rect x="731.30" y="896.30" width="4.75" height="8.50" fill="#f4533c"/><rect x="736.90" y="804.95" width="4.75" height="61.00" fill="#1dbb42"/><rect x="736.90" y="865.95" width="4.75" height="26.56" fill="#5b63ea"/><rect x="736.90" y="892.51" width="4.75" height="12.29" fill="#f4533c"/><rect x="742.50" y="794.63" width="4.75" height="62.97" fill="#1dbb42"/><rect x="742.50" y="857.61" width="4.75" height="32.63" fill="#5b63ea"/><rect x="742.50" y="890.23" width="4.75" height="14.57" fill="#f4533c"/><rect x="748.10" y="794.94" width="4.75" height="64.19" fill="#1dbb42"/><rect x="748.10" y="859.12" width="4.75" height="32.63" fill="#5b63ea"/><rect x="748.10" y="891.75" width="4.75" height="13.05" fill="#f4533c"/><rect x="753.69" y="796.15" width="4.75" height="60.70" fill="#1dbb42"/><rect x="753.69" y="856.85" width="4.75" height="41.73" fill="#5b63ea"/><rect x="753.69" y="898.58" width="4.75" height="6.22" fill="#f4533c"/><rect x="759.29" y="806.01" width="4.75" height="55.39" fill="#1dbb42"/><rect x="759.29" y="861.40" width="4.75" height="37.18" fill="#5b63ea"/><rect x="759.29" y="898.58" width="4.75" height="6.22" fill="#f4533c"/><rect x="764.89" y="806.01" width="4.75" height="53.87" fill="#1dbb42"/><rect x="764.89" y="859.88" width="4.75" height="40.21" fill="#5b63ea"/><rect x="764.89" y="900.10" width="4.75" height="4.70" fill="#f4533c"/><rect x="770.48" y="822.71" width="4.75" height="51.59" fill="#1dbb42"/><rect x="770.48" y="874.30" width="4.75" height="25.80" fill="#5b63ea"/><rect x="770.48" y="900.10" width="4.75" height="4.70" fill="#f4533c"/><rect x="776.08" y="842.43" width="4.75" height="39.45" fill="#1dbb42"/><rect x="776.08" y="881.89" width="4.75" height="14.42" fill="#5b63ea"/><rect x="776.08" y="896.30" width="4.75" height="8.50" fill="#f4533c"/><rect x="781.68" y="871.26" width="4.75" height="27.31" fill="#1dbb42"/><rect x="781.68" y="898.58" width="4.75" height="3.79" fill="#5b63ea"/><rect x="781.68" y="902.37" width="4.75" height="2.43" fill="#f4533c"/><rect x="787.27" y="879.61" width="4.75" height="18.21" fill="#1dbb42"/><rect x="787.27" y="897.82" width="4.75" height="4.55" fill="#5b63ea"/><rect x="787.27" y="902.37" width="4.75" height="2.43" fill="#f4533c"/><rect x="792.87" y="884.92" width="4.75" height="15.93" fill="#1dbb42"/><rect x="792.87" y="900.85" width="4.75" height="2.28" fill="#5b63ea"/><rect x="792.87" y="903.13" width="4.75" height="1.67" fill="#f4533c"/><rect x="798.47" y="884.92" width="4.75" height="16.69" fill="#1dbb42"/><rect x="798.47" y="901.61" width="4.75" height="1.52" fill="#5b63ea"/><rect x="798.47" y="903.13" width="4.75" height="1.67" fill="#f4533c"/><rect x="804.07" y="879.61" width="4.75" height="15.93" fill="#1dbb42"/><rect x="804.07" y="895.54" width="4.75" height="0.76" fill="#5b63ea"/><rect x="804.07" y="896.30" width="4.75" height="8.50" fill="#f4533c"/><rect x="809.66" y="884.92" width="4.75" height="15.93" fill="#1dbb42"/><rect x="809.66" y="900.85" width="4.75" height="1.52" fill="#5b63ea"/><rect x="809.66" y="902.37" width="4.75" height="2.43" fill="#f4533c"/><rect x="815.26" y="884.92" width="4.75" height="14.42" fill="#1dbb42"/><rect x="815.26" y="899.34" width="4.75" height="2.28" fill="#5b63ea"/><rect x="815.26" y="901.61" width="4.75" height="3.19" fill="#f4533c"/><rect x="820.86" y="884.92" width="4.75" height="14.42" fill="#1dbb42"/><rect x="820.86" y="899.34" width="4.75" height="2.28" fill="#5b63ea"/><rect x="820.86" y="901.61" width="4.75" height="3.19" fill="#f4533c"/><rect x="826.45" y="884.92" width="4.75" height="14.42" fill="#1dbb42"/><rect x="826.45" y="899.34" width="4.75" height="2.28" fill="#5b63ea"/><rect x="826.45" y="901.61" width="4.75" height="3.19" fill="#f4533c"/><rect x="832.05" y="883.40" width="4.75" height="15.93" fill="#1dbb42"/><rect x="832.05" y="899.34" width="4.75" height="2.28" fill="#5b63ea"/><rect x="832.05" y="901.61" width="4.75" height="3.19" fill="#f4533c"/><rect x="837.65" y="881.13" width="4.75" height="15.93" fill="#1dbb42"/><rect x="837.65" y="897.06" width="4.75" height="4.55" fill="#5b63ea"/><rect x="837.65" y="901.61" width="4.75" height="3.19" fill="#f4533c"/><rect x="843.24" y="858.37" width="4.75" height="21.24" fill="#1dbb42"/><rect x="843.24" y="879.61" width="4.75" height="13.66" fill="#5b63ea"/><rect x="843.24" y="893.27" width="4.75" height="11.53" fill="#f4533c"/><rect x="848.84" y="831.81" width="4.75" height="40.97" fill="#1dbb42"/><rect x="848.84" y="872.78" width="4.75" height="17.45" fill="#5b63ea"/><rect x="848.84" y="890.23" width="4.75" height="14.57" fill="#f4533c"/><rect x="854.44" y="828.78" width="4.75" height="51.59" fill="#1dbb42"/><rect x="854.44" y="880.37" width="4.75" height="9.10" fill="#5b63ea"/><rect x="854.44" y="889.47" width="4.75" height="15.33" fill="#f4533c"/><rect x="860.04" y="823.46" width="4.75" height="59.18" fill="#1dbb42"/><rect x="860.04" y="882.65" width="4.75" height="10.62" fill="#5b63ea"/><rect x="860.04" y="893.27" width="4.75" height="11.53" fill="#f4533c"/><rect x="865.63" y="818.15" width="4.75" height="59.94" fill="#1dbb42"/><rect x="865.63" y="878.09" width="4.75" height="16.69" fill="#5b63ea"/><rect x="865.63" y="894.78" width="4.75" height="10.02" fill="#f4533c"/><rect x="871.23" y="809.05" width="4.75" height="66.77" fill="#1dbb42"/><rect x="871.23" y="875.82" width="4.75" height="18.97" fill="#5b63ea"/><rect x="871.23" y="894.78" width="4.75" height="10.02" fill="#f4533c"/><rect x="876.83" y="804.95" width="4.75" height="63.28" fill="#1dbb42"/><rect x="876.83" y="868.23" width="4.75" height="22.00" fill="#5b63ea"/><rect x="876.83" y="890.23" width="4.75" height="14.57" fill="#f4533c"/><rect x="882.42" y="806.77" width="4.75" height="63.73" fill="#1dbb42"/><rect x="882.42" y="870.51" width="4.75" height="19.73" fill="#5b63ea"/><rect x="882.42" y="890.23" width="4.75" height="14.57" fill="#f4533c"/><rect x="888.02" y="812.84" width="4.75" height="62.22" fill="#1dbb42"/><rect x="888.02" y="875.06" width="4.75" height="19.73" fill="#5b63ea"/><rect x="888.02" y="894.78" width="4.75" height="10.02" fill="#f4533c"/><rect x="893.62" y="813.60" width="4.75" height="59.64" fill="#1dbb42"/><rect x="893.62" y="873.24" width="4.75" height="20.03" fill="#5b63ea"/><rect x="893.62" y="893.27" width="4.75" height="11.53" fill="#f4533c"/><rect x="899.21" y="818.15" width="4.75" height="56.15" fill="#1dbb42"/><rect x="899.21" y="874.30" width="4.75" height="19.73" fill="#5b63ea"/><rect x="899.21" y="894.03" width="4.75" height="10.77" fill="#f4533c"/><rect x="904.81" y="830.75" width="4.75" height="51.14" fill="#1dbb42"/><rect x="904.81" y="881.89" width="4.75" height="14.42" fill="#5b63ea"/><rect x="904.81" y="896.30" width="4.75" height="8.50" fill="#f4533c"/><rect x="910.41" y="849.56" width="4.75" height="37.63" fill="#1dbb42"/><rect x="910.41" y="887.20" width="4.75" height="9.10" fill="#5b63ea"/><rect x="910.41" y="896.30" width="4.75" height="8.50" fill="#f4533c"/><rect x="916.00" y="873.54" width="4.75" height="22.76" fill="#1dbb42"/><rect x="916.00" y="896.30" width="4.75" height="5.31" fill="#5b63ea"/><rect x="916.00" y="901.61" width="4.75" height="3.19" fill="#f4533c"/><rect x="921.60" y="874.75" width="4.75" height="21.55" fill="#1dbb42"/><rect x="921.60" y="896.30" width="4.75" height="5.31" fill="#5b63ea"/><rect x="921.60" y="901.61" width="4.75" height="3.19" fill="#f4533c"/><rect x="927.20" y="874.75" width="4.75" height="21.55" fill="#1dbb42"/><rect x="927.20" y="896.30" width="4.75" height="5.31" fill="#5b63ea"/><rect x="927.20" y="901.61" width="4.75" height="3.19" fill="#f4533c"/><rect x="932.80" y="867.17" width="4.75" height="28.38" fill="#1dbb42"/><rect x="932.80" y="895.54" width="4.75" height="6.07" fill="#5b63ea"/><rect x="932.80" y="901.61" width="4.75" height="3.19" fill="#f4533c"/><rect x="938.39" y="876.58" width="4.75" height="22.00" fill="#1dbb42"/><rect x="938.39" y="898.58" width="4.75" height="3.03" fill="#5b63ea"/><rect x="938.39" y="901.61" width="4.75" height="3.19" fill="#f4533c"/><rect x="943.99" y="883.40" width="4.75" height="16.69" fill="#1dbb42"/><rect x="943.99" y="900.10" width="4.75" height="2.28" fill="#5b63ea"/><rect x="943.99" y="902.37" width="4.75" height="2.43" fill="#f4533c"/><rect x="949.59" y="883.40" width="4.75" height="15.93" fill="#1dbb42"/><rect x="949.59" y="899.34" width="4.75" height="2.28" fill="#5b63ea"/><rect x="949.59" y="901.61" width="4.75" height="3.19" fill="#f4533c"/><rect x="955.18" y="883.40" width="4.75" height="15.93" fill="#1dbb42"/><rect x="955.18" y="899.34" width="4.75" height="3.03" fill="#5b63ea"/><rect x="955.18" y="902.37" width="4.75" height="2.43" fill="#f4533c"/><rect x="960.78" y="882.65" width="4.75" height="15.93" fill="#1dbb42"/><rect x="960.78" y="898.58" width="4.75" height="3.49" fill="#5b63ea"/><rect x="960.78" y="902.07" width="4.75" height="2.73" fill="#f4533c"/><rect x="966.38" y="881.43" width="4.75" height="16.39" fill="#1dbb42"/><rect x="966.38" y="897.82" width="4.75" height="4.25" fill="#5b63ea"/><rect x="966.38" y="902.07" width="4.75" height="2.73" fill="#f4533c"/><rect x="971.98" y="883.40" width="4.75" height="15.93" fill="#1dbb42"/><rect x="971.98" y="899.34" width="4.75" height="2.73" fill="#5b63ea"/><rect x="971.98" y="902.07" width="4.75" height="2.73" fill="#f4533c"/><rect x="977.57" y="838.64" width="4.75" height="29.59" fill="#1dbb42"/><rect x="977.57" y="868.23" width="4.75" height="18.97" fill="#5b63ea"/><rect x="977.57" y="887.20" width="4.75" height="17.60" fill="#f4533c"/><rect x="983.17" y="830.29" width="4.75" height="43.25" fill="#1dbb42"/><rect x="983.17" y="873.54" width="4.75" height="11.38" fill="#5b63ea"/><rect x="983.17" y="884.92" width="4.75" height="19.88" fill="#f4533c"/><rect x="988.77" y="831.05" width="4.75" height="50.83" fill="#1dbb42"/><rect x="988.77" y="881.89" width="4.75" height="8.35" fill="#5b63ea"/><rect x="988.77" y="890.23" width="4.75" height="14.57" fill="#f4533c"/><rect x="994.36" y="827.26" width="4.75" height="56.15" fill="#1dbb42"/><rect x="994.36" y="883.40" width="4.75" height="11.38" fill="#5b63ea"/><rect x="994.36" y="894.78" width="4.75" height="10.02" fill="#f4533c"/><rect x="999.96" y="819.67" width="4.75" height="57.66" fill="#1dbb42"/><rect x="999.96" y="877.33" width="4.75" height="18.21" fill="#5b63ea"/><rect x="999.96" y="895.54" width="4.75" height="9.26" fill="#f4533c"/><rect x="1005.56" y="812.08" width="4.75" height="57.66" fill="#1dbb42"/><rect x="1005.56" y="869.75" width="4.75" height="25.04" fill="#5b63ea"/><rect x="1005.56" y="894.78" width="4.75" height="10.02" fill="#f4533c"/><rect x="1011.15" y="811.33" width="4.75" height="58.42" fill="#1dbb42"/><rect x="1011.15" y="869.75" width="4.75" height="26.56" fill="#5b63ea"/><rect x="1011.15" y="896.30" width="4.75" height="8.50" fill="#f4533c"/><rect x="1016.75" y="802.98" width="4.75" height="58.42" fill="#1dbb42"/><rect x="1016.75" y="861.40" width="4.75" height="31.87" fill="#5b63ea"/><rect x="1016.75" y="893.27" width="4.75" height="11.53" fill="#f4533c"/><rect x="1022.35" y="812.08" width="4.75" height="54.63" fill="#1dbb42"/><rect x="1022.35" y="866.71" width="4.75" height="33.38" fill="#5b63ea"/><rect x="1022.35" y="900.10" width="4.75" height="4.70" fill="#f4533c"/><rect x="1027.95" y="817.39" width="4.75" height="51.59" fill="#1dbb42"/><rect x="1027.95" y="868.99" width="4.75" height="31.11" fill="#5b63ea"/><rect x="1027.95" y="900.10" width="4.75" height="4.70" fill="#f4533c"/><rect x="1033.54" y="824.68" width="4.75" height="48.86" fill="#1dbb42"/><rect x="1033.54" y="873.54" width="4.75" height="27.31" fill="#5b63ea"/><rect x="1033.54" y="900.85" width="4.75" height="3.95" fill="#f4533c"/><rect x="1039.14" y="839.70" width="4.75" height="45.22" fill="#1dbb42"/><rect x="1039.14" y="884.92" width="4.75" height="17.15" fill="#5b63ea"/><rect x="1039.14" y="902.07" width="4.75" height="2.73" fill="#f4533c"/><rect x="1044.74" y="859.88" width="4.75" height="34.14" fill="#1dbb42"/><rect x="1044.74" y="894.03" width="4.75" height="8.65" fill="#5b63ea"/><rect x="1044.74" y="902.68" width="4.75" height="2.12" fill="#f4533c"/><rect x="1050.33" y="882.65" width="4.75" height="18.97" fill="#1dbb42"/><rect x="1050.33" y="901.61" width="4.75" height="1.06" fill="#5b63ea"/><rect x="1050.33" y="902.68" width="4.75" height="2.12" fill="#f4533c"/><rect x="1055.93" y="876.27" width="4.75" height="22.31" fill="#1dbb42"/><rect x="1055.93" y="898.58" width="4.75" height="1.52" fill="#5b63ea"/><rect x="1055.93" y="900.10" width="4.75" height="4.70" fill="#f4533c"/><rect x="1061.53" y="874.75" width="4.75" height="26.10" fill="#1dbb42"/><rect x="1061.53" y="900.85" width="4.75" height="1.21" fill="#5b63ea"/><rect x="1061.53" y="902.07" width="4.75" height="2.73" fill="#f4533c"/><rect x="1067.12" y="882.65" width="4.75" height="17.45" fill="#1dbb42"/><rect x="1067.12" y="900.10" width="4.75" height="1.82" fill="#5b63ea"/><rect x="1067.12" y="901.92" width="4.75" height="2.88" fill="#f4533c"/><rect x="1072.72" y="883.40" width="4.75" height="16.69" fill="#1dbb42"/><rect x="1072.72" y="900.10" width="4.75" height="1.82" fill="#5b63ea"/><rect x="1072.72" y="901.92" width="4.75" height="2.88" fill="#f4533c"/><rect x="1078.32" y="883.40" width="4.75" height="16.69" fill="#1dbb42"/><rect x="1078.32" y="900.10" width="4.75" height="1.82" fill="#5b63ea"/><rect x="1078.32" y="901.92" width="4.75" height="2.88" fill="#f4533c"/><rect x="1083.91" y="883.40" width="4.75" height="16.69" fill="#1dbb42"/><rect x="1083.91" y="900.10" width="4.75" height="1.82" fill="#5b63ea"/><rect x="1083.91" y="901.92" width="4.75" height="2.88" fill="#f4533c"/><rect x="1089.51" y="883.40" width="4.75" height="15.93" fill="#1dbb42"/><rect x="1089.51" y="899.34" width="4.75" height="2.58" fill="#5b63ea"/><rect x="1089.51" y="901.92" width="4.75" height="2.88" fill="#f4533c"/><rect x="1095.11" y="882.65" width="4.75" height="15.93" fill="#1dbb42"/><rect x="1095.11" y="898.58" width="4.75" height="3.34" fill="#5b63ea"/><rect x="1095.11" y="901.92" width="4.75" height="2.88" fill="#f4533c"/><rect x="1100.71" y="882.65" width="4.75" height="15.93" fill="#1dbb42"/><rect x="1100.71" y="898.58" width="4.75" height="3.34" fill="#5b63ea"/><rect x="1100.71" y="901.92" width="4.75" height="2.88" fill="#f4533c"/><rect x="1106.30" y="883.40" width="4.75" height="15.93" fill="#1dbb42"/><rect x="1106.30" y="899.34" width="4.75" height="2.58" fill="#5b63ea"/><rect x="1106.30" y="901.92" width="4.75" height="2.88" fill="#f4533c"/><rect x="1111.90" y="886.44" width="4.75" height="13.66" fill="#1dbb42"/><rect x="1111.90" y="900.10" width="4.75" height="1.82" fill="#5b63ea"/><rect x="1111.90" y="901.92" width="4.75" height="2.88" fill="#f4533c"/><rect x="1117.50" y="879.61" width="4.75" height="20.49" fill="#1dbb42"/><rect x="1117.50" y="900.10" width="4.75" height="1.82" fill="#5b63ea"/><rect x="1117.50" y="901.92" width="4.75" height="2.88" fill="#f4533c"/><rect x="1123.09" y="881.43" width="4.75" height="17.15" fill="#1dbb42"/><rect x="1123.09" y="898.58" width="4.75" height="3.34" fill="#5b63ea"/><rect x="1123.09" y="901.92" width="4.75" height="2.88" fill="#f4533c"/><rect x="1128.69" y="881.13" width="4.75" height="16.69" fill="#1dbb42"/><rect x="1128.69" y="897.82" width="4.75" height="4.10" fill="#5b63ea"/><rect x="1128.69" y="901.92" width="4.75" height="2.88" fill="#f4533c"/><rect x="1134.29" y="883.40" width="4.75" height="16.69" fill="#1dbb42"/><rect x="1134.29" y="900.10" width="4.75" height="1.82" fill="#5b63ea"/><rect x="1134.29" y="901.92" width="4.75" height="2.88" fill="#f4533c"/><rect x="1139.88" y="883.40" width="4.75" height="16.69" fill="#1dbb42"/><rect x="1139.88" y="900.10" width="4.75" height="1.82" fill="#5b63ea"/><rect x="1139.88" y="901.92" width="4.75" height="2.88" fill="#f4533c"/><rect x="1145.48" y="882.65" width="4.75" height="15.93" fill="#1dbb42"/><rect x="1145.48" y="898.58" width="4.75" height="3.34" fill="#5b63ea"/><rect x="1145.48" y="901.92" width="4.75" height="2.88" fill="#f4533c"/><rect x="1151.08" y="878.85" width="4.75" height="19.73" fill="#1dbb42"/><rect x="1151.08" y="898.58" width="4.75" height="3.34" fill="#5b63ea"/><rect x="1151.08" y="901.92" width="4.75" height="2.88" fill="#f4533c"/><rect x="1156.68" y="849.56" width="4.75" height="26.25" fill="#1dbb42"/><rect x="1156.68" y="875.82" width="4.75" height="26.10" fill="#5b63ea"/><rect x="1156.68" y="901.92" width="4.75" height="2.88" fill="#f4533c"/><rect x="1162.27" y="873.54" width="4.75" height="23.52" fill="#1dbb42"/><rect x="1162.27" y="897.06" width="4.75" height="4.86" fill="#5b63ea"/><rect x="1162.27" y="901.92" width="4.75" height="2.88" fill="#f4533c"/><rect x="1167.87" y="882.65" width="4.75" height="16.69" fill="#1dbb42"/><rect x="1167.87" y="899.34" width="4.75" height="2.58" fill="#5b63ea"/><rect x="1167.87" y="901.92" width="4.75" height="2.88" fill="#f4533c"/><rect x="1173.47" y="882.65" width="4.75" height="17.45" fill="#1dbb42"/><rect x="1173.47" y="900.10" width="4.75" height="1.82" fill="#5b63ea"/><rect x="1173.47" y="901.92" width="4.75" height="2.88" fill="#f4533c"/><rect x="1179.06" y="873.84" width="4.75" height="23.98" fill="#1dbb42"/><rect x="1179.06" y="897.82" width="4.75" height="4.10" fill="#5b63ea"/><rect x="1179.06" y="901.92" width="4.75" height="2.88" fill="#f4533c"/><rect x="1184.66" y="872.48" width="4.75" height="25.34" fill="#1dbb42"/><rect x="1184.66" y="897.82" width="4.75" height="4.10" fill="#5b63ea"/><rect x="1184.66" y="901.92" width="4.75" height="2.88" fill="#f4533c"/><rect x="1190.26" y="883.40" width="4.75" height="16.69" fill="#1dbb42"/><rect x="1190.26" y="900.10" width="4.75" height="1.82" fill="#5b63ea"/><rect x="1190.26" y="901.92" width="4.75" height="2.88" fill="#f4533c"/><rect x="1195.86" y="881.13" width="4.75" height="16.69" fill="#1dbb42"/><rect x="1195.86" y="897.82" width="4.75" height="4.10" fill="#5b63ea"/><rect x="1195.86" y="901.92" width="4.75" height="2.88" fill="#f4533c"/><rect x="1201.45" y="882.19" width="4.75" height="16.39" fill="#1dbb42"/><rect x="1201.45" y="898.58" width="4.75" height="3.34" fill="#5b63ea"/><rect x="1201.45" y="901.92" width="4.75" height="2.88" fill="#f4533c"/><rect x="1207.05" y="884.92" width="4.75" height="15.17" fill="#1dbb42"/><rect x="1207.05" y="900.10" width="4.75" height="1.82" fill="#5b63ea"/><rect x="1207.05" y="901.92" width="4.75" height="2.88" fill="#f4533c"/><rect x="1212.65" y="884.16" width="4.75" height="15.93" fill="#1dbb42"/><rect x="1212.65" y="900.10" width="4.75" height="1.82" fill="#5b63ea"/><rect x="1212.65" y="901.92" width="4.75" height="2.88" fill="#f4533c"/><rect x="1218.24" y="882.65" width="4.75" height="15.17" fill="#1dbb42"/><rect x="1218.24" y="897.82" width="4.75" height="4.10" fill="#5b63ea"/><rect x="1218.24" y="901.92" width="4.75" height="2.88" fill="#f4533c"/><rect x="1223.84" y="884.92" width="4.75" height="14.42" fill="#1dbb42"/><rect x="1223.84" y="899.34" width="4.75" height="2.58" fill="#5b63ea"/><rect x="1223.84" y="901.92" width="4.75" height="2.88" fill="#f4533c"/><rect x="1229.44" y="885.38" width="4.75" height="13.96" fill="#1dbb42"/><rect x="1229.44" y="899.34" width="4.75" height="2.58" fill="#5b63ea"/><rect x="1229.44" y="901.92" width="4.75" height="2.88" fill="#f4533c"/><rect x="1235.03" y="885.38" width="4.75" height="13.20" fill="#1dbb42"/><rect x="1235.03" y="898.58" width="4.75" height="3.34" fill="#5b63ea"/><rect x="1235.03" y="901.92" width="4.75" height="2.88" fill="#f4533c"/><rect x="1240.63" y="882.65" width="4.75" height="16.39" fill="#1dbb42"/><rect x="1240.63" y="899.03" width="4.75" height="2.88" fill="#5b63ea"/><rect x="1240.63" y="901.92" width="4.75" height="2.88" fill="#f4533c"/><rect x="1246.23" y="883.40" width="4.75" height="15.93" fill="#1dbb42"/><rect x="1246.23" y="899.34" width="4.75" height="2.58" fill="#5b63ea"/><rect x="1246.23" y="901.92" width="4.75" height="2.88" fill="#f4533c"/><rect x="1251.83" y="883.40" width="4.75" height="16.69" fill="#1dbb42"/><rect x="1251.83" y="900.10" width="4.75" height="1.82" fill="#5b63ea"/><rect x="1251.83" y="901.92" width="4.75" height="2.88" fill="#f4533c"/><rect x="1257.42" y="882.65" width="4.75" height="16.39" fill="#1dbb42"/><rect x="1257.42" y="899.03" width="4.75" height="2.88" fill="#5b63ea"/><rect x="1257.42" y="901.92" width="4.75" height="2.88" fill="#f4533c"/><rect x="1263.02" y="881.13" width="4.75" height="16.69" fill="#1dbb42"/><rect x="1263.02" y="897.82" width="4.75" height="4.10" fill="#5b63ea"/><rect x="1263.02" y="901.92" width="4.75" height="2.88" fill="#f4533c"/><rect x="1268.62" y="882.65" width="4.75" height="17.00" fill="#1dbb42"/><rect x="1268.62" y="899.64" width="4.75" height="2.28" fill="#5b63ea"/><rect x="1268.62" y="901.92" width="4.75" height="2.88" fill="#f4533c"/><rect x="1274.21" y="883.40" width="4.75" height="17.45" fill="#1dbb42"/><rect x="1274.21" y="900.85" width="4.75" height="1.06" fill="#5b63ea"/><rect x="1274.21" y="901.92" width="4.75" height="2.88" fill="#f4533c"/><rect x="1279.81" y="884.92" width="4.75" height="14.11" fill="#1dbb42"/><rect x="1279.81" y="899.03" width="4.75" height="2.88" fill="#5b63ea"/><rect x="1279.81" y="901.92" width="4.75" height="2.88" fill="#f4533c"/><rect x="1285.41" y="881.13" width="4.75" height="20.03" fill="#1dbb42"/><rect x="1285.41" y="901.16" width="4.75" height="0.76" fill="#5b63ea"/><rect x="1285.41" y="901.92" width="4.75" height="2.88" fill="#f4533c"/><rect x="1291.00" y="883.40" width="4.75" height="17.15" fill="#1dbb42"/><rect x="1291.00" y="900.55" width="4.75" height="1.37" fill="#5b63ea"/><rect x="1291.00" y="901.92" width="4.75" height="2.88" fill="#f4533c"/><rect x="1296.60" y="882.34" width="4.75" height="16.24" fill="#1dbb42"/><rect x="1296.60" y="898.58" width="4.75" height="3.34" fill="#5b63ea"/><rect x="1296.60" y="901.92" width="4.75" height="2.88" fill="#f4533c"/><rect x="1302.20" y="881.13" width="4.75" height="16.69" fill="#1dbb42"/><rect x="1302.20" y="897.82" width="4.75" height="4.10" fill="#5b63ea"/><rect x="1302.20" y="901.92" width="4.75" height="2.88" fill="#f4533c"/><rect x="1307.80" y="879.31" width="4.75" height="20.79" fill="#1dbb42"/><rect x="1307.80" y="900.10" width="4.75" height="1.82" fill="#5b63ea"/><rect x="1307.80" y="901.92" width="4.75" height="2.88" fill="#f4533c"/><rect x="1313.39" y="882.65" width="4.75" height="17.45" fill="#1dbb42"/><rect x="1313.39" y="900.10" width="4.75" height="1.82" fill="#5b63ea"/><rect x="1313.39" y="901.92" width="4.75" height="2.88" fill="#f4533c"/><rect x="1318.99" y="883.40" width="4.75" height="16.69" fill="#1dbb42"/><rect x="1318.99" y="900.10" width="4.75" height="1.82" fill="#5b63ea"/><rect x="1318.99" y="901.92" width="4.75" height="2.88" fill="#f4533c"/><rect x="1324.59" y="883.40" width="4.75" height="15.93" fill="#1dbb42"/><rect x="1324.59" y="899.34" width="4.75" height="2.58" fill="#5b63ea"/><rect x="1324.59" y="901.92" width="4.75" height="2.88" fill="#f4533c"/><rect x="1330.18" y="879.91" width="4.75" height="17.15" fill="#1dbb42"/><rect x="1330.18" y="897.06" width="4.75" height="4.86" fill="#5b63ea"/><rect x="1330.18" y="901.92" width="4.75" height="2.88" fill="#f4533c"/><rect x="1335.78" y="830.29" width="4.75" height="14.42" fill="#1dbb42"/><rect x="1335.78" y="844.71" width="4.75" height="4.25" fill="#5b63ea"/><rect x="1335.78" y="848.96" width="4.75" height="55.84" fill="#f4533c"/><rect x="1341.38" y="860.64" width="4.75" height="13.66" fill="#1dbb42"/><rect x="1341.38" y="874.30" width="4.75" height="3.03" fill="#5b63ea"/><rect x="1341.38" y="877.33" width="4.75" height="27.47" fill="#f4533c"/><rect x="1346.97" y="855.33" width="4.75" height="15.17" fill="#1dbb42"/><rect x="1346.97" y="870.51" width="4.75" height="2.28" fill="#5b63ea"/><rect x="1346.97" y="872.78" width="4.75" height="32.02" fill="#f4533c"/><rect x="1352.57" y="847.74" width="4.75" height="15.48" fill="#1dbb42"/><rect x="1352.57" y="863.22" width="4.75" height="5.01" fill="#5b63ea"/><rect x="1352.57" y="868.23" width="4.75" height="36.57" fill="#f4533c"/><rect x="1358.17" y="853.05" width="4.75" height="13.66" fill="#1dbb42"/><rect x="1358.17" y="866.71" width="4.75" height="3.49" fill="#5b63ea"/><rect x="1358.17" y="870.20" width="4.75" height="34.60" fill="#f4533c"/><rect x="1363.77" y="848.96" width="4.75" height="16.69" fill="#1dbb42"/><rect x="1363.77" y="865.65" width="4.75" height="1.06" fill="#5b63ea"/><rect x="1363.77" y="866.71" width="4.75" height="38.09" fill="#f4533c"/><rect x="1369.36" y="846.23" width="4.75" height="15.93" fill="#1dbb42"/><rect x="1369.36" y="862.16" width="4.75" height="3.79" fill="#5b63ea"/><rect x="1369.36" y="865.95" width="4.75" height="38.85" fill="#f4533c"/><rect x="1374.96" y="843.19" width="4.75" height="20.49" fill="#1dbb42"/><rect x="1374.96" y="863.68" width="4.75" height="5.31" fill="#5b63ea"/><rect x="1374.96" y="868.99" width="4.75" height="35.81" fill="#f4533c"/><rect x="1380.56" y="797.36" width="4.75" height="22.31" fill="#1dbb42"/><rect x="1380.56" y="819.67" width="4.75" height="27.31" fill="#5b63ea"/><rect x="1380.56" y="846.99" width="4.75" height="57.81" fill="#f4533c"/><rect x="1386.15" y="805.26" width="4.75" height="46.28" fill="#1dbb42"/><rect x="1386.15" y="851.54" width="4.75" height="2.28" fill="#5b63ea"/><rect x="1386.15" y="853.81" width="4.75" height="50.99" fill="#f4533c"/><rect x="1391.75" y="823.16" width="4.75" height="41.27" fill="#1dbb42"/><rect x="1391.75" y="864.44" width="4.75" height="40.36" fill="#f4533c"/><rect x="1397.35" y="791.60" width="4.75" height="66.77" fill="#1dbb42"/><rect x="1397.35" y="858.37" width="4.75" height="1.82" fill="#5b63ea"/><rect x="1397.35" y="860.19" width="4.75" height="44.61" fill="#f4533c"/><rect x="1402.94" y="835.91" width="4.75" height="50.53" fill="#1dbb42"/><rect x="1402.94" y="886.44" width="4.75" height="18.36" fill="#f4533c"/><rect x="1408.54" y="806.01" width="4.75" height="59.94" fill="#1dbb42"/><rect x="1408.54" y="865.95" width="4.75" height="5.77" fill="#5b63ea"/><rect x="1408.54" y="871.72" width="4.75" height="33.08" fill="#f4533c"/><rect x="1414.14" y="797.67" width="4.75" height="62.22" fill="#1dbb42"/><rect x="1414.14" y="859.88" width="4.75" height="12.44" fill="#5b63ea"/><rect x="1414.14" y="872.33" width="4.75" height="32.47" fill="#f4533c"/><rect x="1419.74" y="792.36" width="4.75" height="61.76" fill="#1dbb42"/><rect x="1419.74" y="854.12" width="4.75" height="36.87" fill="#5b63ea"/><rect x="1419.74" y="890.99" width="4.75" height="13.81" fill="#f4533c"/><rect x="1425.33" y="784.77" width="4.75" height="59.64" fill="#1dbb42"/><rect x="1425.33" y="844.41" width="4.75" height="55.69" fill="#5b63ea"/><rect x="1425.33" y="900.10" width="4.75" height="4.70" fill="#f4533c"/><rect x="1430.93" y="809.81" width="4.75" height="56.90" fill="#1dbb42"/><rect x="1430.93" y="866.71" width="4.75" height="32.63" fill="#5b63ea"/><rect x="1430.93" y="899.34" width="4.75" height="5.46" fill="#f4533c"/><rect x="1436.53" y="824.98" width="4.75" height="53.11" fill="#1dbb42"/><rect x="1436.53" y="878.09" width="4.75" height="22.76" fill="#5b63ea"/><rect x="1436.53" y="900.85" width="4.75" height="3.95" fill="#f4533c"/><rect x="1442.12" y="831.05" width="4.75" height="50.08" fill="#1dbb42"/><rect x="1442.12" y="881.13" width="4.75" height="18.97" fill="#5b63ea"/><rect x="1442.12" y="900.10" width="4.75" height="4.70" fill="#f4533c"/><rect x="1447.72" y="846.23" width="4.75" height="38.69" fill="#1dbb42"/><rect x="1447.72" y="884.92" width="4.75" height="11.38" fill="#5b63ea"/><rect x="1447.72" y="896.30" width="4.75" height="8.50" fill="#f4533c"/><rect x="1453.32" y="881.89" width="4.75" height="17.15" fill="#1dbb42"/><rect x="1453.32" y="899.03" width="4.75" height="3.34" fill="#5b63ea"/><rect x="1453.32" y="902.37" width="4.75" height="2.43" fill="#f4533c"/><rect x="1458.91" y="881.89" width="4.75" height="17.45" fill="#1dbb42"/><rect x="1458.91" y="899.34" width="4.75" height="2.73" fill="#5b63ea"/><rect x="1458.91" y="902.07" width="4.75" height="2.73" fill="#f4533c"/><rect x="1464.51" y="880.37" width="4.75" height="18.97" fill="#1dbb42"/><rect x="1464.51" y="899.34" width="4.75" height="2.73" fill="#5b63ea"/><rect x="1464.51" y="902.07" width="4.75" height="2.73" fill="#f4533c"/><rect x="1470.11" y="874.75" width="4.75" height="17.75" fill="#1dbb42"/><rect x="1470.11" y="892.51" width="4.75" height="9.56" fill="#5b63ea"/><rect x="1470.11" y="902.07" width="4.75" height="2.73" fill="#f4533c"/><rect x="1475.70" y="882.65" width="4.75" height="15.93" fill="#1dbb42"/><rect x="1475.70" y="898.58" width="4.75" height="3.03" fill="#5b63ea"/><rect x="1475.70" y="901.61" width="4.75" height="3.19" fill="#f4533c"/><rect x="1481.30" y="882.65" width="4.75" height="16.39" fill="#1dbb42"/><rect x="1481.30" y="899.03" width="4.75" height="2.12" fill="#5b63ea"/><rect x="1481.30" y="901.16" width="4.75" height="3.64" fill="#f4533c"/><rect x="1486.90" y="882.65" width="4.75" height="16.39" fill="#1dbb42"/><rect x="1486.90" y="899.03" width="4.75" height="2.58" fill="#5b63ea"/><rect x="1486.90" y="901.61" width="4.75" height="3.19" fill="#f4533c"/><rect x="1492.50" y="882.65" width="4.75" height="15.93" fill="#1dbb42"/><rect x="1492.50" y="898.58" width="4.75" height="2.58" fill="#5b63ea"/><rect x="1492.50" y="901.16" width="4.75" height="3.64" fill="#f4533c"/><rect x="1498.09" y="883.40" width="4.75" height="16.24" fill="#1dbb42"/><rect x="1498.09" y="899.64" width="4.75" height="1.97" fill="#5b63ea"/><rect x="1498.09" y="901.61" width="4.75" height="3.19" fill="#f4533c"/><rect x="1503.69" y="882.65" width="4.75" height="15.93" fill="#1dbb42"/><rect x="1503.69" y="898.58" width="4.75" height="2.58" fill="#5b63ea"/><rect x="1503.69" y="901.16" width="4.75" height="3.64" fill="#f4533c"/><rect x="1509.29" y="883.40" width="4.75" height="16.69" fill="#1dbb42"/><rect x="1509.29" y="900.10" width="4.75" height="1.97" fill="#5b63ea"/><rect x="1509.29" y="902.07" width="4.75" height="2.73" fill="#f4533c"/><rect x="1514.88" y="859.12" width="4.75" height="21.24" fill="#1dbb42"/><rect x="1514.88" y="880.37" width="4.75" height="6.07" fill="#5b63ea"/><rect x="1514.88" y="886.44" width="4.75" height="18.36" fill="#f4533c"/><rect x="1520.48" y="822.25" width="4.75" height="42.19" fill="#1dbb42"/><rect x="1520.48" y="864.44" width="4.75" height="12.90" fill="#5b63ea"/><rect x="1520.48" y="877.33" width="4.75" height="27.47" fill="#f4533c"/><rect x="1526.08" y="832.27" width="4.75" height="51.90" fill="#1dbb42"/><rect x="1526.08" y="884.16" width="4.75" height="1.82" fill="#5b63ea"/><rect x="1526.08" y="885.98" width="4.75" height="18.82" fill="#f4533c"/><rect x="1531.68" y="823.16" width="4.75" height="59.18" fill="#1dbb42"/><rect x="1531.68" y="882.34" width="4.75" height="4.10" fill="#5b63ea"/><rect x="1531.68" y="886.44" width="4.75" height="18.36" fill="#f4533c"/><rect x="1537.27" y="824.22" width="4.75" height="59.94" fill="#1dbb42"/><rect x="1537.27" y="884.16" width="4.75" height="6.83" fill="#5b63ea"/><rect x="1537.27" y="890.99" width="4.75" height="13.81" fill="#f4533c"/><rect x="1542.87" y="810.57" width="4.75" height="59.64" fill="#1dbb42"/><rect x="1542.87" y="870.20" width="4.75" height="9.41" fill="#5b63ea"/><rect x="1542.87" y="879.61" width="4.75" height="25.19" fill="#f4533c"/><rect x="1548.47" y="801.01" width="4.75" height="61.91" fill="#1dbb42"/><rect x="1548.47" y="862.92" width="4.75" height="10.93" fill="#5b63ea"/><rect x="1548.47" y="873.84" width="4.75" height="30.96" fill="#f4533c"/><rect x="1554.06" y="806.01" width="4.75" height="62.97" fill="#5aa968"/><rect x="1554.06" y="868.99" width="4.75" height="16.69" fill="#5a66b6"/><rect x="1554.06" y="885.68" width="4.75" height="19.12" fill="#c4565c"/><path d="M694.4 814.4 L700.5 813.6 L706.6 810.1 L712.6 803.0 L717.2 799.9 L723.2 789.3 L728.6 785.5 L734.6 789.3 L740.7 784.0 L745.6 781.3 L751.3 784.0 L757.4 812.8 L762.7 806.8 L768.0 809.0 L774.1 837.1 L779.4 816.6 L784.7 820.1 L790.8 815.9 L796.1 818.6 L801.4 813.3 L806.7 813.3 L812.8 809.0 L818.1 793.1 L823.4 790.8 L840.8 766.1 L852.2 777.9 L857.5 797.7 L863.6 834.1 L868.9 827.3 L874.2 809.0 L880.3 812.1 L885.6 814.7 L890.9 815.9 L897.0 823.8 L902.3 818.9 L907.6 816.6 L913.7 812.1 L919.0 821.9 L925.1 805.3 L930.4 796.1 L935.7 789.3 L941.0 790.8 L947.1 794.6 L953.1 797.4 L958.5 801.9 L964.6 806.0 L969.1 804.5 L975.2 799.9 L980.5 797.7 L986.6 797.4 L991.9 793.1 L997.2 788.9 L1003.2 796.1 L1008.6 797.4 L1013.9 794.3 L1019.9 798.4 L1025.3 801.0 L1030.6 797.7 L1036.6 797.4 L1041.9 796.9 L1047.3 806.0 L1052.6 814.4 L1058.6 821.2 L1064.7 831.5 L1070.0 827.7 L1075.3 829.2 L1081.4 825.0 L1086.7 826.8 L1092.0 819.7 L1097.3 817.1 L1103.4 815.9 L1109.5 815.1 L1114.8 801.5 L1120.1 799.6 L1125.4 798.9 L1131.5 801.9 L1136.8 801.0 L1142.1 804.9 L1148.2 806.8 L1153.5 805.3 L1159.1 797.7 L1164.9 801.9 L1170.2 809.0 L1175.8 813.3 L1181.5 799.9 L1186.9 798.4 L1192.9 798.1 L1198.2 796.4 L1203.6 794.3 L1208.9 793.1 L1214.9 792.8 L1220.2 792.0 L1225.6 792.0 L1231.6 792.8 L1236.9 793.4 L1243.8 797.4 L1249.1 793.1 L1254.4 785.5 L1259.7 780.2 L1265.8 789.6 L1271.1 789.8 L1276.4 787.3 L1282.5 791.1 L1287.8 787.3 L1293.1 788.3 L1299.9 796.4 L1304.5 798.0 L1310.6 802.5 L1315.9 801.0 L1321.9 803.4 L1327.3 803.7 L1332.6 802.5 L1338.6 798.9 L1343.9 795.4 L1349.3 794.3 L1355.3 790.1 L1360.6 784.8 L1365.9 785.8 L1372.0 788.6 L1377.3 786.7 L1382.6 784.5 L1388.7 784.0 L1394.0 784.3 L1399.3 785.2 L1405.4 785.2 L1410.7 785.8 L1416.8 786.7 L1422.1 788.6 L1428.2 792.4 L1433.5 798.4 L1438.8 808.3 L1444.9 816.6 L1450.2 819.7 L1455.5 823.5 L1461.5 826.5 L1466.9 827.3 L1472.9 825.7 L1478.2 825.7 L1483.6 825.7 L1489.6 823.8 L1494.9 823.0 L1500.2 824.7 L1506.3 826.2 L1512.4 825.3" fill="none" stroke="#626262" stroke-width="2.1" stroke-linejoin="round"/></svg>
<div class="t ax" style="left:661.5px;top:717.3px;font-weight:bold;font-size:11.8px">kWh</div>
<div class="t ax" style="left:651px;top:740.6px;font-size:13px;-webkit-text-stroke:0.2px #333">800</div>
<div class="t ax" style="left:666px;top:900.4px;font-size:13px;-webkit-text-stroke:0.2px #333">0</div>
<div class="t ax" style="left:1657.5px;top:717px;font-size:11.5px">C</div>
<div class="t ax" style="left:1651px;top:740.6px;font-size:13px;-webkit-text-stroke:0.2px #333">0</div>
<div class="t ax" style="left:1651px;top:900.4px;font-size:13px;-webkit-text-stroke:0.2px #333">20</div>
<div class="t ax" style="left:634.5px;top:918.8px;width:120px;text-align:center;letter-spacing:0.3px;-webkit-text-stroke:0.2px #333">08.10.2025 00:00</div>
<div class="t ax" style="left:825.0px;top:918.8px;width:120px;text-align:center;letter-spacing:0.3px;-webkit-text-stroke:0.2px #333">09.10.2025 10:00</div>
<div class="t ax" style="left:1015.5px;top:918.8px;width:120px;text-align:center;letter-spacing:0.3px;-webkit-text-stroke:0.2px #333">10.10.2025 20:00</div>
<div class="t ax" style="left:1205.5px;top:918.8px;width:120px;text-align:center;letter-spacing:0.3px;-webkit-text-stroke:0.2px #333">12.10.2025 06:00</div>
<div class="t ax" style="left:1395.5px;top:918.8px;width:120px;text-align:center;letter-spacing:0.3px;-webkit-text-stroke:0.2px #333">13.10.2025 16:00</div>
<div class="abs" style="left:941px;top:972.5px;width:20px;height:2px;background:#5e5e5e"></div>
<div class="t lg" style="left:968px;top:968.3px">Utetemperatur</div>
<div class="abs" style="left:1085px;top:964px;width:15px;height:15px;background:#1dbb42"></div>
<div class="t lg" style="left:1108px;top:968.3px">El</div>
<div class="abs" style="left:1148px;top:964px;width:15px;height:15px;background:#5b63ea"></div>
<div class="t lg" style="left:1171px;top:968.3px">Fjernkjøling</div>
<div class="abs" style="left:1271px;top:964px;width:15px;height:15px;background:#f4533c"></div>
<div class="t lg" style="left:1294px;top:968.3px">Fjernvarme</div>
<div class="card" style="left:594px;top:1033.5px;width:1131.5px;height:140px"></div>
<div class="t" style="left:623.5px;top:1057.9px;font-size:15.3px;font-weight:bold;color:#444;letter-spacing:1.15px;-webkit-text-stroke:0.35px #444">ET-kurve</div>
<div class="t" style="left:623.5px;top:1078px;font-size:14.3px;color:#a2a2a2;letter-spacing:0.12px">Ukentlige verdier for foregående 26 uker.</div>
<svg class="abs" style="left:1682px;top:1054px" width="25" height="25" viewBox="0 0 25 25"><path d="M10.5 3.5 H3.2 V21.8 H21.5 V14.5" fill="none" stroke="#333" stroke-width="2.1"/><path d="M11 14 L22.5 2.5 M14 1.6 H23.4 V11" fill="none" stroke="#333" stroke-width="2.1"/></svg>
<div class="t ax" style="left:612px;top:1109.5px;font-weight:bold;font-size:12px;letter-spacing:0.6px">kWh/m<span style="font-size:7px;vertical-align:4px">2</span></div>
<div class="t ax" style="left:623.5px;top:1134.3px;font-size:13.2px;letter-spacing:0.3px">200 000</div>
<div class="abs" style="left:692px;top:1137.5px;width:945px;height:1.3px;background:#e9e9e9"></div>
<div class="abs" style="left:1775px;top:0;width:273px;height:1153px;background:#000"></div>
<svg class="abs" style="left:1770px;top:80px" width="278" height="170" viewBox="0 0 1885 1153">
<defs><filter id="bl1" x="-5%" y="-5%" width="110%" height="110%"><feGaussianBlur stdDeviation="9"/></filter>
<linearGradient id="sky1" x1="0" y1="0" x2="0" y2="1"><stop offset="0" stop-color="#fbfbfb"/><stop offset="0.6" stop-color="#f3f5f8"/><stop offset="0.64" stop-color="#c3cfe0"/><stop offset="1" stop-color="#d3dcea"/></linearGradient>
<linearGradient id="sky2" x1="0" y1="0" x2="1" y2="1"><stop offset="0" stop-color="#f6f8fb"/><stop offset="0.55" stop-color="#d6e6f4"/><stop offset="0.7" stop-color="#b3c6dc"/><stop offset="1" stop-color="#a9bcd4"/></linearGradient>
<clipPath id="c1"><rect x="36" y="62" width="1849" height="1054"/></clipPath></defs>
<g clip-path="url(#c1)"><g filter="url(#bl1)">
<rect x="0" y="40" width="1900" height="1100" fill="#e6e1d5"/>
<rect x="20" y="40" width="160" height="1100" fill="#e9e2cf"/>
<rect x="175" y="40" width="150" height="1100" fill="#d5dae4"/>
<rect x="320" y="40" width="180" height="1100" fill="#ecebe8"/>
<rect x="492" y="40" width="648" height="730" fill="#27387a"/>
<rect x="545" y="40" width="560" height="660" fill="url(#sky1)"/>
<rect x="615" y="575" width="200" height="95" fill="#f3f6fa"/>
<rect x="1138" y="40" width="112" height="760" fill="#e9e7e3"/>
<rect x="1246" y="40" width="660" height="738" fill="#26366f"/>
<rect x="1264" y="40" width="610" height="665" fill="url(#sky2)"/>
<rect x="330" y="775" width="1570" height="120" fill="#eeedea"/>
<rect x="330" y="890" width="1570" height="40" fill="#d6d3cc"/>
<rect x="1300" y="925" width="600" height="220" fill="#e8e3d6"/>
<rect x="1450" y="1050" width="330" height="80" fill="#efeadb"/>
<rect x="1476" y="705" width="84" height="98" fill="#f1f1ef"/>
<path d="M1515 710 L1545 520 M1515 710 L1400 590 M1515 710 L1640 600 M1560 740 L1700 690 M1480 730 L1370 660 M1600 760 L1630 650" stroke="#8f93a6" stroke-width="14" fill="none"/>
<rect x="1040" y="480" width="95" height="200" rx="30" fill="#141821"/>
<path d="M1000 700 L1150 690 L1200 800 L1000 800 Z" fill="#12141a"/>
<ellipse cx="925" cy="470" rx="140" ry="175" fill="#77787a"/>
<ellipse cx="925" cy="560" rx="128" ry="190" fill="#dfa597"/>
<ellipse cx="925" cy="430" rx="105" ry="60" fill="#e6b09a"/>
<path d="M805 498 H1055" stroke="#4a3a3a" stroke-width="9"/>
<rect x="820" y="490" width="100" height="70" rx="24" fill="none" stroke="#3a3030" stroke-width="8"/>
<rect x="950" y="490" width="100" height="70" rx="24" fill="none" stroke="#3a3030" stroke-width="8"/>
<path d="M880 640 H975" stroke="#b86a66" stroke-width="12"/>
<path d="M380 1140 L470 940 Q520 850 640 810 L810 720 Q925 800 1035 715 L1200 790 Q1290 830 1320 930 L1370 1140 Z" fill="#0b0b0e"/>
<path d="M795 740 L855 1130" stroke="#c4c9cf" stroke-width="30" fill="none"/>
<path d="M1040 720 L950 1130" stroke="#c4c9cf" stroke-width="30" fill="none"/>
</g></g></svg>
<div class="t" style="left:1790px;top:322px;font-size:17.6px;color:#fff;letter-spacing:0.1px;-webkit-text-stroke:0.2px #fff">Ståle Eriksen</div>
<svg class="abs" style="left:1770px;top:448px" width="278" height="170" viewBox="0 0 1885 1153">
<defs><filter id="bl2" x="-5%" y="-5%" width="110%" height="110%"><feGaussianBlur stdDeviation="10"/></filter>
<linearGradient id="wall2" x1="0" y1="0" x2="1" y2="0"><stop offset="0" stop-color="#c9c4a7"/><stop offset="0.12" stop-color="#d6d0b4"/><stop offset="0.6" stop-color="#dad5bb"/><stop offset="1" stop-color="#d0d6c5"/></linearGradient>
<clipPath id="c2"><rect x="36" y="52" width="1849" height="1053"/></clipPath></defs>
<g clip-path="url(#c2)"><g filter="url(#bl2)">
<rect x="0" y="30" width="1900" height="1100" fill="url(#wall2)"/>
<rect x="0" y="30" width="1900" height="125" fill="#a6b3c4"/><rect x="0" y="150" width="340" height="160" fill="#c2bea1" opacity="0.8"/>
<path d="M350 125 H610 L585 740 L270 1080 L300 700 Z" fill="#6c7a8e"/>
<path d="M40 1100 L50 780 L80 1100 Z M110 1100 L130 700 L165 1100 Z M150 1100 L240 850 L230 1100 Z M60 1100 L100 950 L130 1100Z" fill="#2e4a38"/>
<path d="M120 1100 L215 860 L260 900 L200 1100 Z" fill="#1d2730"/>
<path d="M1440 760 L1500 750 L1640 900 L1620 940 L1540 880 Z" fill="#1a1a1c"/>
<ellipse cx="1010" cy="330" rx="195" ry="245" fill="#6e665f"/>
<ellipse cx="1015" cy="400" rx="180" ry="280" fill="#eab8b3"/>
<ellipse cx="1010" cy="230" rx="150" ry="95" fill="#f3cfca"/>
<path d="M850 640 L1140 640 L1120 900 L1000 1060 L880 880 Z" fill="#e9b9b2"/>
<path d="M900 345 H990 M1080 345 H1160" stroke="#8a8f96" stroke-width="20"/>
<path d="M985 555 H1090" stroke="#d67f7a" stroke-width="14"/>
<path d="M1010 470 H1080" stroke="#b98380" stroke-width="14"/>
<path d="M250 1140 L330 990 Q420 830 560 770 L850 640 L900 860 L1000 1060 L1110 860 L1140 640 L1430 750 Q1560 820 1620 960 L1730 1140 Z" fill="#47619f"/>
<path d="M850 640 L820 760 L1000 1060" stroke="#2e3f73" stroke-width="18" fill="none"/>
<path d="M1140 640 L1170 800 L1000 1060" stroke="#324478" stroke-width="14" fill="none"/>
</g></g></svg>
<div class="abs" style="left:1784px;top:683px;width:222.5px;height:29.5px;border-radius:3px;background:#6d74b3"></div>
<div class="t" style="left:1790px;top:688.3px;font-size:17.6px;color:#fff;font-weight:bold;letter-spacing:-0.05px;-webkit-text-stroke:0.45px #6d74b3">Koenraad T. Kwakkenbos</div>
<div class="abs" style="left:1811.5px;top:793.5px;width:79px;height:79px;border-radius:40px;background:#fbdfe3"></div>
<div class="t" style="left:1811.5px;top:819.0px;width:79px;text-align:center;font-size:31px;color:#8b3943;-webkit-text-stroke:0.5px #8b3943;transform:scaleX(0.86)">EI</div>
<svg class="abs" style="left:1934.5px;top:793px" width="80" height="80" viewBox="0 0 80 80"><defs><clipPath id="cp"><circle cx="40" cy="40" r="39.5"/></clipPath><filter id="bl3"><feGaussianBlur stdDeviation="2.2"/></filter></defs>
<g clip-path="url(#cp)"><g filter="url(#bl3)"><rect x="-5" y="-5" width="90" height="90" fill="#e4e6e8"/><rect x="-5" y="-5" width="90" height="16" fill="#b9bcc0"/><rect x="0" y="20" width="14" height="50" fill="#f6f7f8"/><rect x="60" y="18" width="22" height="36" fill="#f4f4f4"/>
<path d="M18 85 Q14 30 30 16 Q40 8 50 16 Q66 30 64 85 Z" fill="#4b4744"/><ellipse cx="39" cy="36" rx="12.5" ry="16" fill="#c9b2a4"/><path d="M20 85 Q22 58 40 58 Q58 58 60 85 Z" fill="#3c3a3b"/><rect x="10" y="62" width="12" height="14" fill="#3a6fc0"/></g></g></svg>
<div class="abs" style="left:1811.5px;top:917.5px;width:79px;height:79px;border-radius:40px;background:#ebefe1"></div>
<div class="t" style="left:1811.5px;top:943.0px;width:79px;text-align:center;font-size:31px;color:#4c6a3a;-webkit-text-stroke:0.5px #4c6a3a;transform:scaleX(1.00)">TM</div>
<div class="abs" style="left:1935.0px;top:917.5px;width:79px;height:79px;border-radius:40px;background:#4a809d"></div>
<svg class="abs" style="left:1955.5px;top:939px" width="38" height="38" viewBox="0 0 38 38"><circle cx="19" cy="9.5" r="7" fill="none" stroke="#f5fafc" stroke-width="2"/><path d="M3 23 H35 Q33 33.5 19 33.5 Q5 33.5 3 23 Z" fill="none" stroke="#f5fafc" stroke-width="2" stroke-linejoin="round"/></svg>
<div class="abs" style="left:1811.5px;top:1041.5px;width:79px;height:79px;border-radius:40px;background:#dfdcf1"></div>
<div class="t" style="left:1811.5px;top:1067.0px;width:79px;text-align:center;font-size:31px;color:#2c3969;-webkit-text-stroke:0.5px #2c3969;transform:scaleX(0.86)">ES</div>
<div class="abs" style="left:1935.0px;top:1041.5px;width:79px;height:79px;border-radius:40px;background:#4c4e83"></div>
<div class="t" style="left:1935.0px;top:1072.5px;width:79px;text-align:center;font-size:20px;color:#f4f4fa;-webkit-text-stroke:0.5px transparent;transform:scaleX(1.00)">+93</div>
<div class="abs" style="left:1795px;top:861px;width:96px;height:18px;background:#000"></div><div class="abs" style="left:1803px;top:866px;width:80px;height:16px;border-radius:7px;background:linear-gradient(90deg,#626262 0%,#787878 30%,#525252 55%,#707070 80%,#404040 100%);filter:blur(3px)"></div>
<div class="abs" style="left:1918px;top:861px;width:102px;height:18px;background:#000"></div><div class="abs" style="left:1926px;top:866px;width:86px;height:16px;border-radius:7px;background:linear-gradient(90deg,#626262 0%,#787878 30%,#525252 55%,#707070 80%,#404040 100%);filter:blur(3px)"></div>
<div class="abs" style="left:1795px;top:985px;width:96px;height:18px;background:#000"></div><div class="abs" style="left:1803px;top:990px;width:80px;height:16px;border-radius:7px;background:linear-gradient(90deg,#626262 0%,#787878 30%,#525252 55%,#707070 80%,#404040 100%);filter:blur(3px)"></div>
<div class="abs" style="left:1918px;top:985px;width:102px;height:18px;background:#000"></div><div class="abs" style="left:1926px;top:990px;width:86px;height:16px;border-radius:7px;background:linear-gradient(90deg,#626262 0%,#787878 30%,#525252 55%,#707070 80%,#404040 100%);filter:blur(3px)"></div>
<div class="abs" style="left:1793px;top:1109px;width:102px;height:18px;background:#000"></div><div class="abs" style="left:1801px;top:1114px;width:86px;height:16px;border-radius:7px;background:linear-gradient(90deg,#626262 0%,#787878 30%,#525252 55%,#707070 80%,#404040 100%);filter:blur(3px)"></div>

</body></html>
